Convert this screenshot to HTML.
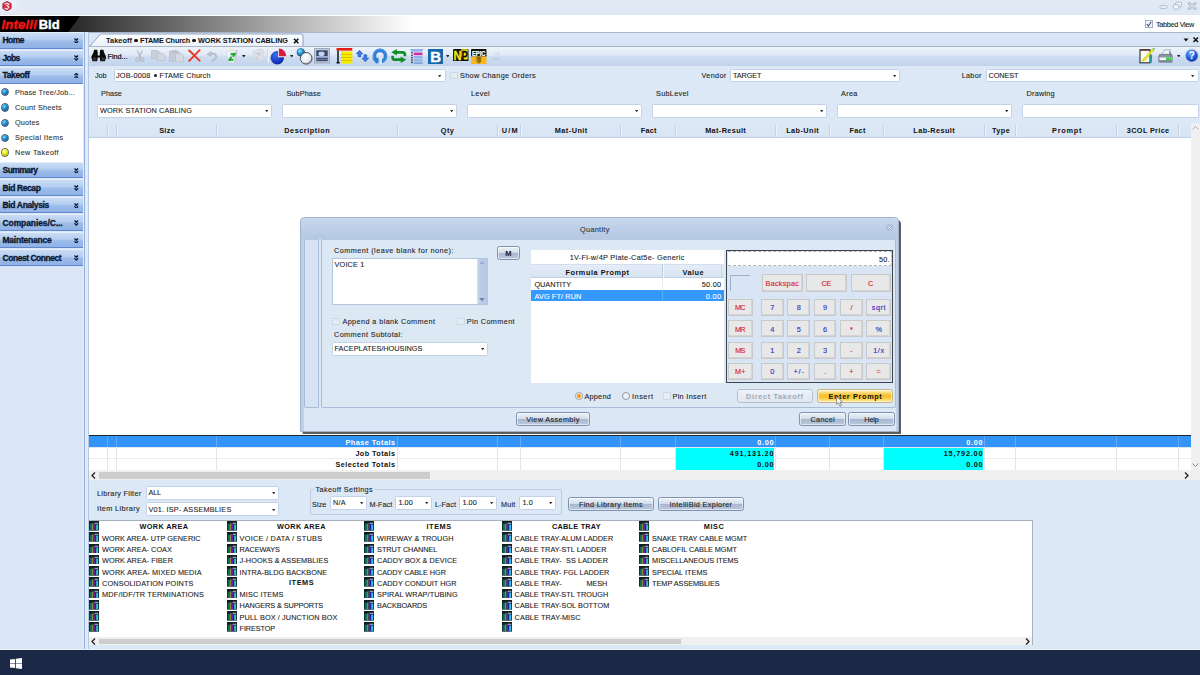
<!DOCTYPE html>
<html><head><meta charset="utf-8"><title>IntelliBid</title>
<style>
html,body{margin:0;padding:0;}
body{width:1200px;height:675px;overflow:hidden;position:relative;background:#dce8f5;font-family:"Liberation Sans",sans-serif;}
div,span.t,svg{position:absolute;box-sizing:border-box;}
span.t{white-space:pre;display:block;}
</style></head><body>
<div style="left:0px;top:0px;width:1200px;height:14.7px;background:linear-gradient(#e2ebf5,#dfe8f3);"></div>
<div style="left:0px;top:14.7px;width:1200px;height:2px;background:#fff;"></div>
<div style="left:0px;top:0px;width:22px;height:14px;background:radial-gradient(ellipse at 30% 40%,rgba(255,255,255,0.600) 0,rgba(255,255,255,0) 75%);"></div>
<svg style="left:1.500px;top:0.500px" width="10" height="10.500" viewBox="0 0 10 10.500"><path d="M5 0.300L9.300 2.600V7.400L5 10.200L0.700 7.400V2.600Z" fill="#d02a3e" stroke="#8a1a2a" stroke-width="0.500"/><path d="M2.300 3.300L5 2l2 1.200-2.200 1.400L7 6 5 8.300 2.600 7" stroke="#fbeaea" stroke-width="1.100" fill="none"/></svg>
<svg style="left:1158px;top:1px" width="40" height="10" viewBox="0 0 40 10"><g fill="#f1f5fa" stroke="#a9b7ca" stroke-width="0.900"><rect x="2" y="4.600" width="7" height="2.800" rx="1.200"/><rect x="17.500" y="1.300" width="6" height="4.600" rx="0.800"/><rect x="15.300" y="3.700" width="5.600" height="4.400" rx="0.800"/></g><path d="M31 2.300l6.400 5.400M37.400 2.300L31 7.700" stroke="#a3b2c6" stroke-width="2.600" stroke-linecap="round"/><path d="M31 2.300l6.400 5.400M37.400 2.300L31 7.700" stroke="#f3f6fa" stroke-width="1" stroke-linecap="round"/></svg>
<div style="left:0px;top:16px;width:1200px;height:16px;background:linear-gradient(to right,#262626 0,#2c2c2c 76px,#ffffff 412px,#fff 100%);"></div>
<svg style="left:0;top:15.5px" width="90" height="16.500" viewBox="0 0 90 16.500"><path d="M0 0H80L68 16.500H0Z" fill="#000"/></svg>
<span class="t" style="left:1.50px;top:15.50px;font-size:13px;line-height:17px;height:17px;letter-spacing:0.222px;color:#f01414;font-weight:bold;font-style:italic;-webkit-text-stroke:0.450px #f01414;">Intelli</span>
<span class="t" style="left:38.70px;top:15.50px;font-size:13px;line-height:17px;height:17px;letter-spacing:0.020px;color:#ffffff;font-weight:bold;-webkit-text-stroke:0.450px #fff;">Bid</span>
<div style="left:1145px;top:20px;width:8px;height:8px;background:#f3f6fb;border:1px solid #9fb0c8;"></div>
<svg style="left:1146px;top:21px" width="6" height="6" viewBox="0 0 6 6"><path d="M0.800 3l1.600 2L5.300.8" stroke="#3b4f78" stroke-width="1.100" fill="none"/></svg>
<span class="t" style="left:1156.00px;top:19.05px;font-size:7.3px;line-height:11.3px;height:11.3px;letter-spacing:-0.333px;color:#222;-webkit-text-stroke:0.090px #222;">Tabbed View</span>
<div style="left:0px;top:32px;width:84px;height:618px;background:#dae6f5;"></div>
<div style="left:0px;top:84px;width:84px;height:78px;background:#ffffff;"></div>
<div style="left:0px;top:32px;width:84px;height:16.5px;background:linear-gradient(#cadcf4 0,#b4cdf0 45%,#9dbcea 55%,#8fb1e5 100%);border-bottom:1px solid #5f88cf;border-top:1px solid #e4eefb;"></div>
<span class="t" style="left:2.50px;top:34.30px;font-size:8.5px;line-height:12.5px;height:12.5px;letter-spacing:-0.529px;color:#0a1630;font-weight:bold;-webkit-text-stroke:0.300px #0a1630;">Home</span>
<svg style="left:74px;top:37.75px" width="4.600" height="5.600" viewBox="-0.500 -0.500 4.600 5.600"><path d="M0 0L1.800 1.800L3.600 0M0 2.800L1.800 4.600L3.600 2.800" stroke="#0c1a38" stroke-width="1.300" fill="none"/></svg>
<div style="left:0px;top:49.5px;width:84px;height:16.5px;background:linear-gradient(#cadcf4 0,#b4cdf0 45%,#9dbcea 55%,#8fb1e5 100%);border-bottom:1px solid #5f88cf;border-top:1px solid #e4eefb;"></div>
<span class="t" style="left:2.50px;top:51.80px;font-size:8.5px;line-height:12.5px;height:12.5px;letter-spacing:-0.709px;color:#0a1630;font-weight:bold;-webkit-text-stroke:0.300px #0a1630;">Jobs</span>
<svg style="left:74px;top:55.25px" width="4.600" height="5.600" viewBox="-0.500 -0.500 4.600 5.600"><path d="M0 0L1.800 1.800L3.600 0M0 2.800L1.800 4.600L3.600 2.800" stroke="#0c1a38" stroke-width="1.300" fill="none"/></svg>
<div style="left:0px;top:67px;width:84px;height:16.5px;background:linear-gradient(#cadcf4 0,#b4cdf0 45%,#9dbcea 55%,#8fb1e5 100%);border-bottom:1px solid #5f88cf;border-top:1px solid #e4eefb;"></div>
<span class="t" style="left:2.50px;top:69.30px;font-size:8.5px;line-height:12.5px;height:12.5px;letter-spacing:-0.370px;color:#0a1630;font-weight:bold;-webkit-text-stroke:0.300px #0a1630;">Takeoff</span>
<svg style="left:74px;top:72.75px" width="4.600" height="5.600" viewBox="-0.500 -0.500 4.600 5.600"><path d="M0 1.800L1.800 0L3.600 1.800M0 4.600L1.800 2.800L3.600 4.600" stroke="#0c1a38" stroke-width="1.300" fill="none"/></svg>
<div style="left:0px;top:161.8px;width:84px;height:16.7px;background:linear-gradient(#cadcf4 0,#b4cdf0 45%,#9dbcea 55%,#8fb1e5 100%);border-bottom:1px solid #5f88cf;border-top:1px solid #e4eefb;"></div>
<span class="t" style="left:2.50px;top:164.20px;font-size:8.5px;line-height:12.5px;height:12.5px;letter-spacing:-0.534px;color:#0a1630;font-weight:bold;-webkit-text-stroke:0.300px #0a1630;">Summary</span>
<svg style="left:74px;top:167.65px" width="4.600" height="5.600" viewBox="-0.500 -0.500 4.600 5.600"><path d="M0 0L1.800 1.800L3.600 0M0 2.800L1.800 4.600L3.600 2.800" stroke="#0c1a38" stroke-width="1.300" fill="none"/></svg>
<div style="left:0px;top:179.3px;width:84px;height:16.7px;background:linear-gradient(#cadcf4 0,#b4cdf0 45%,#9dbcea 55%,#8fb1e5 100%);border-bottom:1px solid #5f88cf;border-top:1px solid #e4eefb;"></div>
<span class="t" style="left:2.50px;top:181.70px;font-size:8.5px;line-height:12.5px;height:12.5px;letter-spacing:-0.396px;color:#0a1630;font-weight:bold;-webkit-text-stroke:0.300px #0a1630;">Bid Recap</span>
<svg style="left:74px;top:185.15px" width="4.600" height="5.600" viewBox="-0.500 -0.500 4.600 5.600"><path d="M0 0L1.800 1.800L3.600 0M0 2.800L1.800 4.600L3.600 2.800" stroke="#0c1a38" stroke-width="1.300" fill="none"/></svg>
<div style="left:0px;top:196.8px;width:84px;height:16.7px;background:linear-gradient(#cadcf4 0,#b4cdf0 45%,#9dbcea 55%,#8fb1e5 100%);border-bottom:1px solid #5f88cf;border-top:1px solid #e4eefb;"></div>
<span class="t" style="left:2.50px;top:199.20px;font-size:8.5px;line-height:12.5px;height:12.5px;letter-spacing:-0.350px;color:#0a1630;font-weight:bold;-webkit-text-stroke:0.300px #0a1630;">Bid Analysis</span>
<svg style="left:74px;top:202.65px" width="4.600" height="5.600" viewBox="-0.500 -0.500 4.600 5.600"><path d="M0 0L1.800 1.800L3.600 0M0 2.800L1.800 4.600L3.600 2.800" stroke="#0c1a38" stroke-width="1.300" fill="none"/></svg>
<div style="left:0px;top:214.3px;width:84px;height:16.7px;background:linear-gradient(#cadcf4 0,#b4cdf0 45%,#9dbcea 55%,#8fb1e5 100%);border-bottom:1px solid #5f88cf;border-top:1px solid #e4eefb;"></div>
<span class="t" style="left:2.50px;top:216.70px;font-size:8.5px;line-height:12.5px;height:12.5px;letter-spacing:-0.100px;color:#0a1630;font-weight:bold;-webkit-text-stroke:0.300px #0a1630;">Companies/C...</span>
<svg style="left:74px;top:220.15px" width="4.600" height="5.600" viewBox="-0.500 -0.500 4.600 5.600"><path d="M0 0L1.800 1.800L3.600 0M0 2.800L1.800 4.600L3.600 2.800" stroke="#0c1a38" stroke-width="1.300" fill="none"/></svg>
<div style="left:0px;top:231.8px;width:84px;height:16.7px;background:linear-gradient(#cadcf4 0,#b4cdf0 45%,#9dbcea 55%,#8fb1e5 100%);border-bottom:1px solid #5f88cf;border-top:1px solid #e4eefb;"></div>
<span class="t" style="left:2.50px;top:234.20px;font-size:8.5px;line-height:12.5px;height:12.5px;letter-spacing:-0.226px;color:#0a1630;font-weight:bold;-webkit-text-stroke:0.300px #0a1630;">Maintenance</span>
<svg style="left:74px;top:237.65px" width="4.600" height="5.600" viewBox="-0.500 -0.500 4.600 5.600"><path d="M0 0L1.800 1.800L3.600 0M0 2.800L1.800 4.600L3.600 2.800" stroke="#0c1a38" stroke-width="1.300" fill="none"/></svg>
<div style="left:0px;top:249.3px;width:84px;height:16.7px;background:linear-gradient(#cadcf4 0,#b4cdf0 45%,#9dbcea 55%,#8fb1e5 100%);border-bottom:1px solid #5f88cf;border-top:1px solid #e4eefb;"></div>
<span class="t" style="left:2.50px;top:251.70px;font-size:8.5px;line-height:12.5px;height:12.5px;letter-spacing:-0.462px;color:#0a1630;font-weight:bold;-webkit-text-stroke:0.300px #0a1630;">Conest Connect</span>
<svg style="left:74px;top:255.15px" width="4.600" height="5.600" viewBox="-0.500 -0.500 4.600 5.600"><path d="M0 0L1.800 1.800L3.600 0M0 2.800L1.800 4.600L3.600 2.800" stroke="#0c1a38" stroke-width="1.300" fill="none"/></svg>
<div style="left:2.3px;top:89.2px;width:6.2px;height:6.2px;border-radius:50%;background:radial-gradient(circle at 38% 35%,#7fdcff 0,#1a94d4 38%,#0c4f98 75%,#082850 100%);box-shadow:0 0 0 0.700px rgba(8,20,45,0.850);"></div>
<span class="t" style="left:15.00px;top:86.75px;font-size:7.3px;line-height:11.3px;height:11.3px;letter-spacing:0.164px;color:#333;-webkit-text-stroke:0.090px #333;">Phase Tree/Job...</span>
<div style="left:2.3px;top:104.4px;width:6.2px;height:6.2px;border-radius:50%;background:radial-gradient(circle at 38% 35%,#7fdcff 0,#1a94d4 38%,#0c4f98 75%,#082850 100%);box-shadow:0 0 0 0.700px rgba(8,20,45,0.850);"></div>
<span class="t" style="left:15.00px;top:101.95px;font-size:7.3px;line-height:11.3px;height:11.3px;letter-spacing:0.231px;color:#333;-webkit-text-stroke:0.090px #333;">Count Sheets</span>
<div style="left:2.3px;top:119.5px;width:6.2px;height:6.2px;border-radius:50%;background:radial-gradient(circle at 38% 35%,#7fdcff 0,#1a94d4 38%,#0c4f98 75%,#082850 100%);box-shadow:0 0 0 0.700px rgba(8,20,45,0.850);"></div>
<span class="t" style="left:15.00px;top:117.05px;font-size:7.3px;line-height:11.3px;height:11.3px;letter-spacing:0.161px;color:#333;-webkit-text-stroke:0.090px #333;">Quotes</span>
<div style="left:2.3px;top:134.5px;width:6.2px;height:6.2px;border-radius:50%;background:radial-gradient(circle at 38% 35%,#7fdcff 0,#1a94d4 38%,#0c4f98 75%,#082850 100%);box-shadow:0 0 0 0.700px rgba(8,20,45,0.850);"></div>
<span class="t" style="left:15.00px;top:132.05px;font-size:7.3px;line-height:11.3px;height:11.3px;letter-spacing:0.360px;color:#333;-webkit-text-stroke:0.090px #333;">Special Items</span>
<div style="left:2.3px;top:149.4px;width:6.2px;height:6.2px;border-radius:50%;background:radial-gradient(circle at 38% 35%,#ffffb0 0,#f2ec10 40%,#b0aa00 80%,#6a6600 100%);box-shadow:0 0 0 0.700px rgba(8,20,45,0.850);"></div>
<span class="t" style="left:15.00px;top:146.95px;font-size:7.3px;line-height:11.3px;height:11.3px;letter-spacing:0.373px;color:#333;-webkit-text-stroke:0.090px #333;">New Takeoff</span>
<div style="left:83.3px;top:32px;width:5.5px;height:618px;background:#e1ebf8;"></div>
<div style="left:84.3px;top:32px;width:1.2px;height:618px;background:#93addb;"></div>
<div style="left:88.3px;top:32px;width:0.8px;height:618px;background:#b4c6e2;"></div>
<div style="left:89px;top:31.6px;width:1111px;height:14.9px;background:linear-gradient(#dde8f7,#d6e3f5);border-top:1.500px solid #a9b4c4;"></div>
<svg style="left:89px;top:33px" width="216" height="14" viewBox="0 0 216 14"><defs><linearGradient id="tg" x1="0" y1="0" x2="0" y2="1"><stop offset="0" stop-color="#ffffff"/><stop offset="1" stop-color="#eaf1fa"/></linearGradient></defs><path d="M0 13.500L2 12L10.500 2Q11.500 1 13.500 1H212Q214 1 214 3V13.500Z" fill="url(#tg)" stroke="#8aa3c6" stroke-width="1"/></svg>
<span class="t" style="left:106.00px;top:35.15px;font-size:7.3px;line-height:11.3px;height:11.3px;letter-spacing:0.084px;color:#111;font-weight:bold;">Takeoff</span>
<span class="t" style="left:140.00px;top:35.15px;font-size:7.3px;line-height:11.3px;height:11.3px;letter-spacing:-0.181px;color:#111;font-weight:bold;">FTAME Church</span>
<span class="t" style="left:198.00px;top:35.15px;font-size:7.3px;line-height:11.3px;height:11.3px;letter-spacing:-0.069px;color:#111;font-weight:bold;">WORK STATION CABLING</span>
<div style="left:134.3px;top:38.9px;width:3.4px;height:3.4px;border-radius:50%;background:#111;"></div>
<div style="left:192.3px;top:38.9px;width:3.4px;height:3.4px;border-radius:50%;background:#111;"></div>
<svg style="left:293px;top:37.800px" width="6.400" height="6" viewBox="0 0 6.400 6"><path d="M1 0.800l4.400 4.400M5.400 0.800l-4.400 4.400" stroke="#111" stroke-width="1.600"/></svg>
<svg style="left:1183px;top:36px" width="17" height="8" viewBox="0 0 17 8"><path d="M0.500 2.500h5l-2.500 3z" fill="#111"/><path d="M10.500 1.500l4.500 4.500M15 1.500l-4.500 4.500" stroke="#111" stroke-width="1.500"/></svg>
<div style="left:89px;top:46px;width:1111px;height:20px;background:linear-gradient(#eef3fa 0,#dfe9f6 45%,#cddcf0 55%,#c3d4ec 100%);border-top:1.300px solid #aab5c5;border-bottom:1px solid #c3d2e8;"></div>
<svg style="left:90.5px;top:48.8px" width="15.5" height="12.8" viewBox="0 0 15 15" preserveAspectRatio="none"><g fill="#0a0a0a"><path d="M1.500 14.500L0.300 9.500L2.500 3.500L3 1h3l.5 3v3.500h2V4L9 1h3l.5 2.500L14.700 9.500L13.500 14.500H9L8.500 10h-2L6 14.500Z"/></g><rect x="1.800" y="10" width="3.200" height="3.400" fill="#333"/><rect x="10" y="10" width="3.200" height="3.400" fill="#333"/></svg>
<span class="t" style="left:107.60px;top:50.95px;font-size:7.3px;line-height:11.3px;height:11.3px;letter-spacing:-0.041px;color:#111;-webkit-text-stroke:0.200px #111;">Find...</span>
<svg style="left:135px;top:49.5px" width="9.5" height="12.2" viewBox="0 0 11 14" preserveAspectRatio="none"><g stroke="#b4bbc7" stroke-width="1.500" fill="none"><path d="M2.500 0.500L7 9M8.500 0.500L4 9"/><circle cx="2.800" cy="11" r="2"/><circle cx="8.200" cy="11" r="2"/></g></svg>
<svg style="left:150.5px;top:50px" width="15" height="11" viewBox="0 0 15 11" preserveAspectRatio="none"><g fill="#c9cfd8" stroke="#bcc3cd" stroke-width="0.800"><path d="M0.500 0.500h6l2 2v6h-8z"/><path d="M6 3h5.500l2.500 2.500v5H6z" fill="#d3d8e0"/></g></svg>
<svg style="left:169px;top:49.5px" width="15" height="12.2" viewBox="0 0 15 12.2" preserveAspectRatio="none"><g fill="#c6ccd6" stroke="#bac1cc" stroke-width="0.800"><rect x="0.500" y="1.500" width="9.500" height="9.500"/><rect x="3" y="0.300" width="4.500" height="2.500" fill="#bdc4ce"/><path d="M6.500 3.500h5.500l2.500 2.500v5.700h-8z" fill="#d6dbe2"/></g></svg>
<svg style="left:188px;top:49.2px" width="12.8" height="12.8" viewBox="0 0 12.8 12.8" preserveAspectRatio="none"><path d="M1.200 1.500L11.600 11.600" stroke="#e63a22" stroke-width="2" stroke-linecap="round"/><path d="M11.600 1.200L1.200 11.800" stroke="#ee3320" stroke-width="1.800" stroke-linecap="round"/></svg>
<svg style="left:206px;top:50px" width="13" height="12" viewBox="0 0 13 12" preserveAspectRatio="none"><path d="M3.500 4.200C8 2.500 11.500 5 9.500 8.500Q8.500 10 6.500 11" stroke="#bac1cc" stroke-width="2.200" fill="none" stroke-linecap="round"/><path d="M0.300 4.500L5.500 0.800L5.800 7z" fill="#bac1cc"/></svg>
<svg style="left:224.5px;top:47.5px" width="14" height="15.5" viewBox="0 0 14 15.5" preserveAspectRatio="none"><path d="M1 3.500L12.500 2l-2 12.500L4 14.800z" fill="#eef3f8" stroke="#cfd8e4" stroke-width="0.700"/><path d="M10.500 3L12.500 2l-2 12.500-1.300.1z" fill="#b9c7da"/><path d="M4 2.500l2.500-2L9 2z" fill="#f6eaa0"/><path d="M5.500 6.200h4L8 8.700M8.500 11.700H4.800l1.500-3" stroke="#1aa62a" stroke-width="1.900" fill="none"/><path d="M8.300 4.200l2.600 2L8 7.700zM5.500 13.600L3 11.500l3-1.400z" fill="#1aa62a"/></svg>
<svg style="left:242.4px;top:55px" width="3.6" height="2.6" viewBox="0 0 3.6 2.6" preserveAspectRatio="none"><path d="M0 0h3.600l-1.800 2.400z" fill="#222"/></svg>
<svg style="left:250px;top:48px" width="14.5" height="14" viewBox="0 0 14.5 14" preserveAspectRatio="none"><path d="M3 3L11 1l3 2-1 9-9 1.500z" fill="#dce2e9" stroke="#ced5de" stroke-width="0.700"/><path d="M5.500 5.500h4.500l-1.500 2.500M9 11H5.500l1.300-2.800" stroke="#c8cfd9" stroke-width="1.500" fill="none"/></svg>
<div style="left:267px;top:49px;width:1px;height:14px;background:#cfdaea;"></div>
<div style="left:268px;top:49px;width:1px;height:14px;background:#eff4fa;"></div>
<svg style="left:270px;top:47.5px" width="17" height="17" viewBox="0 0 17 17" preserveAspectRatio="none"><defs><radialGradient id="pg" cx="0.400" cy="0.300" r="0.850"><stop offset="0" stop-color="#3f70ee"/><stop offset="0.600" stop-color="#1638c0"/><stop offset="1" stop-color="#0a1d7a"/></radialGradient></defs><circle cx="7.300" cy="9.800" r="6.700" fill="url(#pg)"/><path d="M8 9.300V0.800A8.500 8.500 0 0 1 16.500 9.300Z" fill="#e9eff8"/><path d="M8.900 8.300V0.600A7.500 7.500 0 0 1 16.300 8.300Z" fill="#d81c3c"/></svg>
<svg style="left:289.9px;top:55px" width="3.6" height="2.6" viewBox="0 0 3.6 2.6" preserveAspectRatio="none"><path d="M0 0h3.600l-1.800 2.400z" fill="#222"/></svg>
<svg style="left:295.5px;top:47.5px" width="17" height="17" viewBox="0 0 17 17" preserveAspectRatio="none"><defs><radialGradient id="cg1" cx="0.350" cy="0.300" r="0.800"><stop offset="0" stop-color="#8fe0ff"/><stop offset="0.500" stop-color="#2a9ad6"/><stop offset="1" stop-color="#0a4a88"/></radialGradient><radialGradient id="cg2" cx="0.400" cy="0.350" r="0.750"><stop offset="0" stop-color="#ffffff"/><stop offset="0.650" stop-color="#e9edf1"/><stop offset="1" stop-color="#737c86"/></radialGradient></defs><circle cx="4.800" cy="4.300" r="3.900" fill="url(#cg1)" stroke="#1a3a5a" stroke-width="0.500"/><circle cx="10.200" cy="10.300" r="5.800" fill="url(#cg2)" stroke="#3a3f46" stroke-width="0.900"/></svg>
<svg style="left:314px;top:48px" width="16" height="15.5" viewBox="0 0 16 15.5" preserveAspectRatio="none"><rect x="0.600" y="0.600" width="14.800" height="14.300" fill="#c6cfdb" stroke="#9aa6b6" stroke-width="1"/><rect x="2.300" y="2.300" width="11.400" height="10.900" fill="#34446f"/><ellipse cx="7.500" cy="5.800" rx="3.200" ry="2.300" fill="#c3d2ea"/><rect x="2.300" y="8" width="11.400" height="1.800" fill="#9fb2d6"/><rect x="2.300" y="10.800" width="11.400" height="1.300" fill="#6878a0"/></svg>
<svg style="left:336px;top:48px" width="16.5" height="16" viewBox="0 0 16.5 16" preserveAspectRatio="none"><rect x="0.500" y="0" width="15.800" height="2.600" fill="#e61c14"/><path d="M2 2.500v12.300M0.500 14.800h3.200" stroke="#111" stroke-width="1.500"/><rect x="5" y="3.400" width="11.300" height="12.300" fill="#f6ee00"/><path d="M5 6.500h11.300M5 9.500h11.300M5 12.500h11.300" stroke="#e0a800" stroke-width="0.700"/></svg>
<svg style="left:355.5px;top:50px" width="13" height="12" viewBox="0 0 13 12" preserveAspectRatio="none"><g fill="#3a7ce6" stroke="#1b4fb8" stroke-width="0.600"><path d="M3.500 0.300L6.800 3.800H4.900V6.700H2.100V3.800H0.200z"/><path d="M9.300 11.700L6 8.200H7.900V4.800h2.800v3.400h1.900z"/></g></svg>
<svg style="left:372px;top:47.5px" width="16" height="16" viewBox="0 0 16 16" preserveAspectRatio="none"><circle cx="8" cy="8" r="5.600" fill="none" stroke="#2f7fd8" stroke-width="3.600"/><circle cx="8" cy="8" r="6.800" fill="none" stroke="#5a9fe8" stroke-width="0.800"/><path d="M7.300 8V16h2.600V10z" fill="#dfe9f6"/><path d="M0.300 10.500L7 9.800L4.500 16z" fill="#2f7fd8"/><path d="M7 9.800L7 16" stroke="#dfe9f6" stroke-width="0.600"/></svg>
<svg style="left:391px;top:48.5px" width="15.5" height="14" viewBox="0 0 15.5 14" preserveAspectRatio="none"><g fill="none" stroke="#0f8f22" stroke-width="2.700"><path d="M5 3.300H11.300Q13.900 3.300 13.900 5.600V7.200"/><path d="M10.500 10.700H4.200Q1.600 10.700 1.600 8.400V6.800"/></g><path d="M5.800 0L0.200 3.300L5.800 6.600z" fill="#0f8f22"/><path d="M9.700 7.400L15.300 10.700L9.700 14z" fill="#0f8f22"/></svg>
<svg style="left:410px;top:48.5px" width="13.5" height="15.5" viewBox="0 0 13.5 15.5" preserveAspectRatio="none"><path d="M0 0h13.500l-1.500 2.800H1.500z" fill="#8fb6ea"/><path d="M2 3v12" stroke="#222" stroke-width="1.300" stroke-dasharray="1.600 0.800"/><rect x="3.800" y="3.600" width="8.700" height="2.600" fill="#d628a0"/><rect x="3.800" y="7" width="8.700" height="2.500" fill="#8db4e6"/><rect x="3.800" y="10.200" width="8.700" height="2.300" fill="#8db4e6"/><rect x="3.800" y="13.200" width="8.700" height="2" fill="#7aa6e0"/></svg>
<svg style="left:427.5px;top:48.5px" width="15.2" height="15.2" viewBox="0 0 15.2 15.2" preserveAspectRatio="none"><rect width="15.200" height="15.200" fill="#1666aa"/><text x="7.700" y="13" text-anchor="middle" font-family="Liberation Sans, sans-serif" font-weight="bold" font-size="15" fill="#fff" stroke="#fff" stroke-width="0.400">B</text></svg>
<svg style="left:445.8px;top:55px" width="3.6" height="2.6" viewBox="0 0 3.6 2.6" preserveAspectRatio="none"><path d="M0 0h3.600l-1.800 2.400z" fill="#222"/></svg>
<svg style="left:453px;top:48.5px" width="15.5" height="12.7" viewBox="0 0 15.5 12.7" preserveAspectRatio="none"><rect width="15.500" height="12.700" rx="1.200" fill="#0c0c0c"/><path d="M8.300 0.300h6.400v10.200H10.300L8.300 7z" fill="#f4ea10"/><text x="0.400" y="10.800" font-family="Liberation Sans, sans-serif" font-weight="bold" font-size="12" fill="#f4ea10" stroke="#f4ea10" stroke-width="0.300" textLength="8" lengthAdjust="spacingAndGlyphs">N</text><text x="8.500" y="10.800" font-family="Liberation Sans, sans-serif" font-weight="bold" font-size="12" fill="#0c0c0c" stroke="#0c0c0c" stroke-width="0.300" textLength="6.300" lengthAdjust="spacingAndGlyphs">P</text></svg>
<svg style="left:471px;top:48.5px" width="15.5" height="15" viewBox="0 0 15.5 15" preserveAspectRatio="none"><rect width="15.500" height="7.800" rx="0.800" fill="#101010"/><rect y="7.500" width="15.500" height="7.500" fill="#f7b71a"/><text x="7.750" y="6.700" text-anchor="middle" font-family="Liberation Sans, sans-serif" font-weight="bold" font-size="7" fill="#fff" stroke="#fff" stroke-width="0.250" textLength="13.500" lengthAdjust="spacingAndGlyphs">EPIC</text><path d="M5.800 8.500h4v3.300q0 1.500-2 2.500q-2-1-2-2.500z" fill="#e6a400" stroke="#6a5410" stroke-width="0.700"/><text x="7.800" y="13.300" text-anchor="middle" font-family="Liberation Sans, sans-serif" font-weight="bold" font-size="5" fill="#5a4708">$</text></svg>
<svg style="left:493px;top:50.5px" width="8" height="6" viewBox="0 0 8 6" preserveAspectRatio="none"><path d="M0.500 3h5.500M4 0.800L6.500 3L4 5.200" stroke="#ccd4de" stroke-width="0.900" fill="none"/></svg>
<span class="t" style="left:492.40px;top:56.25px;font-size:3.5px;line-height:7.5px;height:7.5px;letter-spacing:0.000px;color:#bfc8d4;-webkit-text-stroke:0.090px #bfc8d4;">Task</span>
<svg style="left:1139px;top:48px" width="16" height="16" viewBox="0 0 16 16" preserveAspectRatio="none"><rect x="1" y="1.800" width="10" height="13" fill="#fbfbf6" stroke="#3a3a3a" stroke-width="1.200"/><path d="M1 2h10" stroke="#5a3030" stroke-width="1.400"/><path d="M3 12.500L13.500 0.800l1.500 1.300L5 13.500z" fill="#f2e41a" stroke="#b8aa10" stroke-width="0.400"/><path d="M13.500 0.800l1.500 1.300l1-1.300l-1-.8z" fill="#2ab89a"/><path d="M11.300 6.500l1.900.5-.5 8h-1.900z" fill="#1f9a8a"/></svg>
<svg style="left:1157.5px;top:48.5px" width="15" height="14.5" viewBox="0 0 15 14.5" preserveAspectRatio="none"><path d="M4 5.500L6.500 0.800h6L11.500 5.500z" fill="#f2f4f7" stroke="#9aa2ae" stroke-width="0.700"/><path d="M0.800 7Q0.800 5.300 2.500 5.300h10Q14.200 5.300 14.200 7V12.500H0.800z" fill="#8a93a0" stroke="#6d7684" stroke-width="0.700"/><path d="M11 1l2.800 4.500v1h-2z" fill="#737c8a"/><rect x="1.500" y="8.500" width="12" height="2.600" fill="#f4f6f8"/><rect x="8" y="8.500" width="5" height="2.600" fill="#2fd43e"/><rect x="0.800" y="11.500" width="13.400" height="2.200" fill="#7d8694"/></svg>
<svg style="left:1176.5px;top:54.9px" width="3.6" height="2.6" viewBox="0 0 3.6 2.6" preserveAspectRatio="none"><path d="M0 0h3.600l-1.800 2.400z" fill="#222"/></svg>
<svg style="left:1183.5px;top:48px" width="15.5" height="15.5" viewBox="0 0 15.5 15.5" preserveAspectRatio="none"><defs><radialGradient id="hg" cx="0.400" cy="0.300" r="0.800"><stop offset="0" stop-color="#6aa8ff"/><stop offset="0.550" stop-color="#1f5fd4"/><stop offset="1" stop-color="#0a2f9a"/></radialGradient></defs><circle cx="7.750" cy="7.750" r="7.200" fill="#c3d3ec"/><circle cx="7.750" cy="7.750" r="6" fill="url(#hg)"/><text x="7.750" y="11.300" text-anchor="middle" font-family="Liberation Sans, sans-serif" font-weight="bold" font-size="10" fill="#fff">?</text></svg>
<span class="t" style="left:95.00px;top:70.15px;font-size:7.3px;line-height:11.3px;height:11.3px;letter-spacing:-0.090px;color:#222;-webkit-text-stroke:0.090px #222;">Job</span>
<div style="left:113.5px;top:69px;width:332px;height:13.3px;background:#fff;border:1px solid #c3d2e8;border-radius:1.500px;"></div>
<svg style="left:438.3px;top:75.25px" width="3.400" height="2.400" viewBox="0 0 3.400 2.400"><path d="M0 0h3.400l-1.700 2.200z" fill="#333"/></svg>
<span class="t" style="left:116.00px;top:70.25px;font-size:7.3px;line-height:11.3px;height:11.3px;letter-spacing:0.217px;color:#222;-webkit-text-stroke:0.090px #222;">JOB-0008</span>
<span class="t" style="left:159.40px;top:70.25px;font-size:7.3px;line-height:11.3px;height:11.3px;letter-spacing:0.120px;color:#222;-webkit-text-stroke:0.090px #222;">FTAME Church</span>
<div style="left:153.5px;top:74.2px;width:3px;height:3px;border-radius:50%;background:#222;"></div>
<div style="left:450px;top:71.5px;width:7.5px;height:7.5px;background:#e6ecf5;border:1px solid #cdd7e6;"></div>
<span class="t" style="left:460.00px;top:70.25px;font-size:7.3px;line-height:11.3px;height:11.3px;letter-spacing:0.323px;color:#222;-webkit-text-stroke:0.090px #222;">Show Change Orders</span>
<span class="t" style="left:701.50px;top:70.25px;font-size:7.3px;line-height:11.3px;height:11.3px;letter-spacing:0.311px;color:#222;-webkit-text-stroke:0.090px #222;">Vendor</span>
<div style="left:730px;top:69px;width:170px;height:13.3px;background:#fff;border:1px solid #c3d2e8;border-radius:1.500px;"></div>
<svg style="left:892.8px;top:75.25px" width="3.400" height="2.400" viewBox="0 0 3.400 2.400"><path d="M0 0h3.400l-1.700 2.200z" fill="#333"/></svg>
<span class="t" style="left:733.00px;top:70.30px;font-size:7.3px;line-height:11.3px;height:11.3px;letter-spacing:-0.094px;color:#222;-webkit-text-stroke:0.090px #222;">TARGET</span>
<span class="t" style="left:961.70px;top:70.25px;font-size:7.3px;line-height:11.3px;height:11.3px;letter-spacing:0.266px;color:#222;-webkit-text-stroke:0.090px #222;">Labor</span>
<div style="left:985.5px;top:69px;width:213px;height:13.3px;background:#fff;border:1px solid #c3d2e8;border-radius:1.500px;"></div>
<svg style="left:1191.3px;top:75.25px" width="3.400" height="2.400" viewBox="0 0 3.400 2.400"><path d="M0 0h3.400l-1.700 2.200z" fill="#333"/></svg>
<span class="t" style="left:988.50px;top:70.30px;font-size:7.3px;line-height:11.3px;height:11.3px;letter-spacing:-0.070px;color:#222;-webkit-text-stroke:0.090px #222;">CONEST</span>
<span class="t" style="left:101.00px;top:87.85px;font-size:7.3px;line-height:11.3px;height:11.3px;letter-spacing:0.060px;color:#222;-webkit-text-stroke:0.090px #222;">Phase</span>
<span class="t" style="left:286.40px;top:87.85px;font-size:7.3px;line-height:11.3px;height:11.3px;letter-spacing:0.114px;color:#222;-webkit-text-stroke:0.090px #222;">SubPhase</span>
<span class="t" style="left:471.00px;top:87.85px;font-size:7.3px;line-height:11.3px;height:11.3px;letter-spacing:0.310px;color:#222;-webkit-text-stroke:0.090px #222;">Level</span>
<span class="t" style="left:656.00px;top:87.85px;font-size:7.3px;line-height:11.3px;height:11.3px;letter-spacing:0.283px;color:#222;-webkit-text-stroke:0.090px #222;">SubLevel</span>
<span class="t" style="left:841.00px;top:87.85px;font-size:7.3px;line-height:11.3px;height:11.3px;letter-spacing:0.320px;color:#222;-webkit-text-stroke:0.090px #222;">Area</span>
<span class="t" style="left:1026.50px;top:87.85px;font-size:7.3px;line-height:11.3px;height:11.3px;letter-spacing:0.232px;color:#222;-webkit-text-stroke:0.090px #222;">Drawing</span>
<div style="left:97px;top:104px;width:175px;height:13.6px;background:#fff;border:1px solid #c3d2e8;border-radius:1.500px;"></div>
<svg style="left:264.8px;top:110.4px" width="3.400" height="2.400" viewBox="0 0 3.400 2.400"><path d="M0 0h3.400l-1.700 2.200z" fill="#333"/></svg>
<span class="t" style="left:100.00px;top:105.45px;font-size:7.3px;line-height:11.3px;height:11.3px;letter-spacing:0.132px;color:#222;-webkit-text-stroke:0.090px #222;">WORK STATION CABLING</span>
<div style="left:282px;top:104px;width:175px;height:13.6px;background:#fff;border:1px solid #c3d2e8;border-radius:1.500px;"></div>
<svg style="left:449.8px;top:110.4px" width="3.400" height="2.400" viewBox="0 0 3.400 2.400"><path d="M0 0h3.400l-1.700 2.200z" fill="#333"/></svg>
<div style="left:467px;top:104px;width:175px;height:13.6px;background:#fff;border:1px solid #c3d2e8;border-radius:1.500px;"></div>
<svg style="left:634.8px;top:110.4px" width="3.400" height="2.400" viewBox="0 0 3.400 2.400"><path d="M0 0h3.400l-1.700 2.200z" fill="#333"/></svg>
<div style="left:652px;top:104px;width:175px;height:13.6px;background:#fff;border:1px solid #c3d2e8;border-radius:1.500px;"></div>
<svg style="left:819.8px;top:110.4px" width="3.400" height="2.400" viewBox="0 0 3.400 2.400"><path d="M0 0h3.400l-1.700 2.200z" fill="#333"/></svg>
<div style="left:837px;top:104px;width:175px;height:13.6px;background:#fff;border:1px solid #c3d2e8;border-radius:1.500px;"></div>
<svg style="left:1004.8px;top:110.4px" width="3.400" height="2.400" viewBox="0 0 3.400 2.400"><path d="M0 0h3.400l-1.700 2.200z" fill="#333"/></svg>
<div style="left:1022px;top:104px;width:176.5px;height:13.6px;background:#fff;border:1px solid #c3d2e8;border-radius:1.500px;"></div>
<div style="left:89px;top:123px;width:1111px;height:15px;background:linear-gradient(#dde8f6,#d9e5f4);border-bottom:1px solid #bfcfe6;"></div>
<div style="left:89px;top:138px;width:1101.5px;height:298px;background:#fff;"></div>
<div style="left:106.5px;top:125px;width:1px;height:12px;background:#c3d1e6;"></div>
<div style="left:107.5px;top:125px;width:1px;height:12px;background:#edf3fa;"></div>
<div style="left:115.5px;top:125px;width:1px;height:12px;background:#c3d1e6;"></div>
<div style="left:116.5px;top:125px;width:1px;height:12px;background:#edf3fa;"></div>
<div style="left:215.5px;top:125px;width:1px;height:12px;background:#c3d1e6;"></div>
<div style="left:216.5px;top:125px;width:1px;height:12px;background:#edf3fa;"></div>
<div style="left:396.5px;top:125px;width:1px;height:12px;background:#c3d1e6;"></div>
<div style="left:397.5px;top:125px;width:1px;height:12px;background:#edf3fa;"></div>
<div style="left:496.5px;top:125px;width:1px;height:12px;background:#c3d1e6;"></div>
<div style="left:497.5px;top:125px;width:1px;height:12px;background:#edf3fa;"></div>
<div style="left:520.2px;top:125px;width:1px;height:12px;background:#c3d1e6;"></div>
<div style="left:521.2px;top:125px;width:1px;height:12px;background:#edf3fa;"></div>
<div style="left:620.2px;top:125px;width:1px;height:12px;background:#c3d1e6;"></div>
<div style="left:621.2px;top:125px;width:1px;height:12px;background:#edf3fa;"></div>
<div style="left:675.1px;top:125px;width:1px;height:12px;background:#c3d1e6;"></div>
<div style="left:676.1px;top:125px;width:1px;height:12px;background:#edf3fa;"></div>
<div style="left:774.5px;top:125px;width:1px;height:12px;background:#c3d1e6;"></div>
<div style="left:775.5px;top:125px;width:1px;height:12px;background:#edf3fa;"></div>
<div style="left:829.1px;top:125px;width:1px;height:12px;background:#c3d1e6;"></div>
<div style="left:830.1px;top:125px;width:1px;height:12px;background:#edf3fa;"></div>
<div style="left:883px;top:125px;width:1px;height:12px;background:#c3d1e6;"></div>
<div style="left:884px;top:125px;width:1px;height:12px;background:#edf3fa;"></div>
<div style="left:983.5px;top:125px;width:1px;height:12px;background:#c3d1e6;"></div>
<div style="left:984.5px;top:125px;width:1px;height:12px;background:#edf3fa;"></div>
<div style="left:1015.3px;top:125px;width:1px;height:12px;background:#c3d1e6;"></div>
<div style="left:1016.3px;top:125px;width:1px;height:12px;background:#edf3fa;"></div>
<div style="left:1115.5px;top:125px;width:1px;height:12px;background:#c3d1e6;"></div>
<div style="left:1116.5px;top:125px;width:1px;height:12px;background:#edf3fa;"></div>
<div style="left:1178.3px;top:125px;width:1px;height:12px;background:#c3d1e6;"></div>
<div style="left:1179.3px;top:125px;width:1px;height:12px;background:#edf3fa;"></div>
<span class="t" style="left:159.17px;top:125.25px;font-size:7.3px;line-height:11.3px;height:11.3px;letter-spacing:0.348px;color:#111;font-weight:bold;">Size</span>
<span class="t" style="left:284.27px;top:125.25px;font-size:7.3px;line-height:11.3px;height:11.3px;letter-spacing:0.531px;color:#111;font-weight:bold;">Description</span>
<span class="t" style="left:440.84px;top:125.25px;font-size:7.3px;line-height:11.3px;height:11.3px;letter-spacing:0.377px;color:#111;font-weight:bold;">Qty</span>
<span class="t" style="left:501.70px;top:125.25px;font-size:7.3px;line-height:11.3px;height:11.3px;letter-spacing:1.306px;color:#111;font-weight:bold;">U/M</span>
<span class="t" style="left:554.74px;top:125.25px;font-size:7.3px;line-height:11.3px;height:11.3px;letter-spacing:0.476px;color:#111;font-weight:bold;">Mat-Unit</span>
<span class="t" style="left:640.72px;top:125.25px;font-size:7.3px;line-height:11.3px;height:11.3px;letter-spacing:0.248px;color:#111;font-weight:bold;">Fact</span>
<span class="t" style="left:705.18px;top:125.25px;font-size:7.3px;line-height:11.3px;height:11.3px;letter-spacing:0.369px;color:#111;font-weight:bold;">Mat-Result</span>
<span class="t" style="left:786.21px;top:125.25px;font-size:7.3px;line-height:11.3px;height:11.3px;letter-spacing:0.425px;color:#111;font-weight:bold;">Lab-Unit</span>
<span class="t" style="left:849.62px;top:125.25px;font-size:7.3px;line-height:11.3px;height:11.3px;letter-spacing:0.248px;color:#111;font-weight:bold;">Fact</span>
<span class="t" style="left:913.35px;top:125.25px;font-size:7.3px;line-height:11.3px;height:11.3px;letter-spacing:0.398px;color:#111;font-weight:bold;">Lab-Result</span>
<span class="t" style="left:991.88px;top:125.25px;font-size:7.3px;line-height:11.3px;height:11.3px;letter-spacing:0.451px;color:#111;font-weight:bold;">Type</span>
<span class="t" style="left:1052.07px;top:125.25px;font-size:7.3px;line-height:11.3px;height:11.3px;letter-spacing:0.742px;color:#111;font-weight:bold;">Prompt</span>
<span class="t" style="left:1126.87px;top:125.25px;font-size:7.3px;line-height:11.3px;height:11.3px;letter-spacing:0.338px;color:#111;font-weight:bold;">3COL Price</span>
<div style="left:1190.5px;top:123px;width:9.5px;height:347px;background:#f0f0f0;"></div>
<svg style="left:1192px;top:126px" width="7" height="4" viewBox="0 0 7 4"><path d="M0.500 3.500L3.500 0.500L6.500 3.500" stroke="#b0b0b0" stroke-width="1" fill="none"/></svg>
<svg style="left:1192px;top:463px" width="7" height="4" viewBox="0 0 7 4"><path d="M0.500 0.500L3.500 3.500L6.500 0.500" stroke="#8a8a8a" stroke-width="1" fill="none"/></svg>
<div style="left:89px;top:434.6px;width:1101.5px;height:1.8px;background:#1f2730;"></div>
<div style="left:89px;top:436.2px;width:1101.5px;height:11.3px;background:#3294f6;"></div>
<div style="left:89px;top:447.5px;width:1101.5px;height:22.7px;background:#fff;"></div>
<div style="left:89px;top:458.3px;width:1101.5px;height:1px;background:#ececec;"></div>
<div style="left:106.5px;top:436.3px;width:1px;height:11.2px;background:#5fa9f6;"></div>
<div style="left:106.5px;top:447.5px;width:1px;height:22.7px;background:#e4e4e4;"></div>
<div style="left:115.5px;top:436.3px;width:1px;height:11.2px;background:#5fa9f6;"></div>
<div style="left:115.5px;top:447.5px;width:1px;height:22.7px;background:#e4e4e4;"></div>
<div style="left:215.5px;top:436.3px;width:1px;height:11.2px;background:#5fa9f6;"></div>
<div style="left:215.5px;top:447.5px;width:1px;height:22.7px;background:#e4e4e4;"></div>
<div style="left:396.5px;top:436.3px;width:1px;height:11.2px;background:#5fa9f6;"></div>
<div style="left:396.5px;top:447.5px;width:1px;height:22.7px;background:#e4e4e4;"></div>
<div style="left:496.5px;top:436.3px;width:1px;height:11.2px;background:#5fa9f6;"></div>
<div style="left:496.5px;top:447.5px;width:1px;height:22.7px;background:#e4e4e4;"></div>
<div style="left:520.2px;top:436.3px;width:1px;height:11.2px;background:#5fa9f6;"></div>
<div style="left:520.2px;top:447.5px;width:1px;height:22.7px;background:#e4e4e4;"></div>
<div style="left:620.2px;top:436.3px;width:1px;height:11.2px;background:#5fa9f6;"></div>
<div style="left:620.2px;top:447.5px;width:1px;height:22.7px;background:#e4e4e4;"></div>
<div style="left:675.1px;top:436.3px;width:1px;height:11.2px;background:#5fa9f6;"></div>
<div style="left:675.1px;top:447.5px;width:1px;height:22.7px;background:#e4e4e4;"></div>
<div style="left:774.5px;top:436.3px;width:1px;height:11.2px;background:#5fa9f6;"></div>
<div style="left:774.5px;top:447.5px;width:1px;height:22.7px;background:#e4e4e4;"></div>
<div style="left:829.1px;top:436.3px;width:1px;height:11.2px;background:#5fa9f6;"></div>
<div style="left:829.1px;top:447.5px;width:1px;height:22.7px;background:#e4e4e4;"></div>
<div style="left:883px;top:436.3px;width:1px;height:11.2px;background:#5fa9f6;"></div>
<div style="left:883px;top:447.5px;width:1px;height:22.7px;background:#e4e4e4;"></div>
<div style="left:983.5px;top:436.3px;width:1px;height:11.2px;background:#5fa9f6;"></div>
<div style="left:983.5px;top:447.5px;width:1px;height:22.7px;background:#e4e4e4;"></div>
<div style="left:1015.3px;top:436.3px;width:1px;height:11.2px;background:#5fa9f6;"></div>
<div style="left:1015.3px;top:447.5px;width:1px;height:22.7px;background:#e4e4e4;"></div>
<div style="left:1115.5px;top:436.3px;width:1px;height:11.2px;background:#5fa9f6;"></div>
<div style="left:1115.5px;top:447.5px;width:1px;height:22.7px;background:#e4e4e4;"></div>
<div style="left:1178.3px;top:436.3px;width:1px;height:11.2px;background:#5fa9f6;"></div>
<div style="left:1178.3px;top:447.5px;width:1px;height:22.7px;background:#e4e4e4;"></div>
<div style="left:675.8px;top:447.8px;width:98.7px;height:22.2px;background:#00ffff;"></div>
<div style="left:883.8px;top:447.8px;width:99.7px;height:22.2px;background:#00ffff;"></div>
<span class="t" style="left:345.46px;top:436.85px;font-size:7.3px;line-height:11.3px;height:11.3px;letter-spacing:0.459px;color:#fff;font-weight:bold;">Phase Totals</span>
<span class="t" style="left:355.40px;top:448.05px;font-size:7.3px;line-height:11.3px;height:11.3px;letter-spacing:0.404px;color:#111;font-weight:bold;">Job Totals</span>
<span class="t" style="left:335.47px;top:459.25px;font-size:7.3px;line-height:11.3px;height:11.3px;letter-spacing:0.466px;color:#111;font-weight:bold;">Selected Totals</span>
<span class="t" style="left:757.20px;top:436.85px;font-size:7.3px;line-height:11.3px;height:11.3px;letter-spacing:0.698px;color:#fff;font-weight:bold;">0.00</span>
<span class="t" style="left:729.80px;top:448.05px;font-size:7.3px;line-height:11.3px;height:11.3px;letter-spacing:0.797px;color:#111;font-weight:bold;">491,131.20</span>
<span class="t" style="left:757.20px;top:459.25px;font-size:7.3px;line-height:11.3px;height:11.3px;letter-spacing:0.698px;color:#111;font-weight:bold;">0.00</span>
<span class="t" style="left:966.20px;top:436.85px;font-size:7.3px;line-height:11.3px;height:11.3px;letter-spacing:0.698px;color:#fff;font-weight:bold;">0.00</span>
<span class="t" style="left:943.78px;top:448.05px;font-size:7.3px;line-height:11.3px;height:11.3px;letter-spacing:0.781px;color:#111;font-weight:bold;">15,792.00</span>
<span class="t" style="left:966.20px;top:459.25px;font-size:7.3px;line-height:11.3px;height:11.3px;letter-spacing:0.698px;color:#111;font-weight:bold;">0.00</span>
<div style="left:89px;top:470.2px;width:1101.5px;height:10px;background:#f0f0f0;"></div>
<div style="left:99px;top:471.7px;width:331px;height:7px;background:#cdcdcd;"></div>
<svg style="left:91px;top:472px" width="5" height="7" viewBox="0 0 5 7"><path d="M4 0.500L1 3.500L4 6.500" stroke="#222" stroke-width="1.300" fill="none"/></svg>
<svg style="left:1183.500px;top:472px" width="5" height="7" viewBox="0 0 5 7"><path d="M1 0.500L4 3.500L1 6.500" stroke="#222" stroke-width="1.300" fill="none"/></svg>
<div style="left:1190.5px;top:470.2px;width:9.5px;height:10px;background:#f0f0f0;"></div>
<span class="t" style="left:97.00px;top:488.35px;font-size:7.3px;line-height:11.3px;height:11.3px;letter-spacing:0.281px;color:#222;-webkit-text-stroke:0.090px #222;">Library Filter</span>
<div style="left:145.5px;top:486px;width:133.5px;height:13.5px;background:#fff;border:1px solid #c3d2e8;border-radius:1.500px;"></div>
<svg style="left:271.8px;top:492.35px" width="3.400" height="2.400" viewBox="0 0 3.400 2.400"><path d="M0 0h3.400l-1.700 2.200z" fill="#333"/></svg>
<span class="t" style="left:148.50px;top:487.40px;font-size:7.3px;line-height:11.3px;height:11.3px;letter-spacing:-0.163px;color:#222;-webkit-text-stroke:0.090px #222;">ALL</span>
<span class="t" style="left:97.00px;top:503.35px;font-size:7.3px;line-height:11.3px;height:11.3px;letter-spacing:0.372px;color:#222;-webkit-text-stroke:0.090px #222;">Item Library</span>
<div style="left:145.5px;top:502.4px;width:133.5px;height:13.6px;background:#fff;border:1px solid #c3d2e8;border-radius:1.500px;"></div>
<svg style="left:271.8px;top:508.8px" width="3.400" height="2.400" viewBox="0 0 3.400 2.400"><path d="M0 0h3.400l-1.700 2.200z" fill="#333"/></svg>
<span class="t" style="left:148.50px;top:503.85px;font-size:7.3px;line-height:11.3px;height:11.3px;letter-spacing:0.194px;color:#222;-webkit-text-stroke:0.090px #222;">V01. ISP- ASSEMBLIES</span>
<div style="left:309.5px;top:489px;width:252px;height:26px;border:1px solid #bccbe2;border-radius:2px;"></div>
<div style="left:313.5px;top:485px;width:61.5px;height:8px;background:#dce8f5;"></div>
<span class="t" style="left:315.50px;top:484.35px;font-size:7.3px;line-height:11.3px;height:11.3px;letter-spacing:0.356px;color:#222;-webkit-text-stroke:0.090px #222;">Takeoff Settings</span>
<span class="t" style="left:312.00px;top:499.05px;font-size:7.3px;line-height:11.3px;height:11.3px;letter-spacing:0.075px;color:#222;-webkit-text-stroke:0.090px #222;">Size</span>
<div style="left:330px;top:496px;width:37px;height:13.5px;background:#fff;border:1px solid #c3d2e8;border-radius:1.500px;"></div>
<svg style="left:359.8px;top:502.35px" width="3.400" height="2.400" viewBox="0 0 3.400 2.400"><path d="M0 0h3.400l-1.700 2.200z" fill="#333"/></svg>
<span class="t" style="left:333.00px;top:497.40px;font-size:7.3px;line-height:11.3px;height:11.3px;letter-spacing:0.277px;color:#222;-webkit-text-stroke:0.090px #222;">N/A</span>
<span class="t" style="left:369.40px;top:499.05px;font-size:7.3px;line-height:11.3px;height:11.3px;letter-spacing:0.049px;color:#222;-webkit-text-stroke:0.090px #222;">M-Fact</span>
<div style="left:395.4px;top:496px;width:37px;height:13.5px;background:#fff;border:1px solid #c3d2e8;border-radius:1.500px;"></div>
<svg style="left:425.2px;top:502.35px" width="3.400" height="2.400" viewBox="0 0 3.400 2.400"><path d="M0 0h3.400l-1.700 2.200z" fill="#333"/></svg>
<span class="t" style="left:398.40px;top:497.40px;font-size:7.3px;line-height:11.3px;height:11.3px;letter-spacing:0.073px;color:#222;-webkit-text-stroke:0.090px #222;">1.00</span>
<span class="t" style="left:435.00px;top:499.05px;font-size:7.3px;line-height:11.3px;height:11.3px;letter-spacing:0.052px;color:#222;-webkit-text-stroke:0.090px #222;">L-Fact</span>
<div style="left:459.4px;top:496px;width:38px;height:13.5px;background:#fff;border:1px solid #c3d2e8;border-radius:1.500px;"></div>
<svg style="left:490.2px;top:502.35px" width="3.400" height="2.400" viewBox="0 0 3.400 2.400"><path d="M0 0h3.400l-1.700 2.200z" fill="#333"/></svg>
<span class="t" style="left:462.40px;top:497.40px;font-size:7.3px;line-height:11.3px;height:11.3px;letter-spacing:0.073px;color:#222;-webkit-text-stroke:0.090px #222;">1.00</span>
<span class="t" style="left:501.00px;top:499.05px;font-size:7.3px;line-height:11.3px;height:11.3px;letter-spacing:0.202px;color:#222;-webkit-text-stroke:0.090px #222;">Mult</span>
<div style="left:519.4px;top:496px;width:37px;height:13.5px;background:#fff;border:1px solid #c3d2e8;border-radius:1.500px;"></div>
<svg style="left:549.2px;top:502.35px" width="3.400" height="2.400" viewBox="0 0 3.400 2.400"><path d="M0 0h3.400l-1.700 2.200z" fill="#333"/></svg>
<span class="t" style="left:522.40px;top:497.40px;font-size:7.3px;line-height:11.3px;height:11.3px;letter-spacing:0.118px;color:#222;-webkit-text-stroke:0.090px #222;">1.0</span>
<div style="left:567.5px;top:497px;width:86.5px;height:13.8px;background:linear-gradient(#edf2f8 0,#d3deeb 46%,#a9b8cf 54%,#bccade 100%);border:1px solid #7f93b0;border-radius:2.500px;box-shadow:inset 0 0 0 1px rgba(255,255,255,0.550);"></div>
<span class="t" style="left:578.91px;top:499.15px;font-size:7.3px;line-height:11.3px;height:11.3px;letter-spacing:0.310px;color:#1c1c1c;-webkit-text-stroke:0.090px #1c1c1c;">Find Library Items</span>
<div style="left:657.5px;top:497px;width:86.5px;height:13.8px;background:linear-gradient(#edf2f8 0,#d3deeb 46%,#a9b8cf 54%,#bccade 100%);border:1px solid #7f93b0;border-radius:2.500px;box-shadow:inset 0 0 0 1px rgba(255,255,255,0.550);"></div>
<span class="t" style="left:669.41px;top:499.15px;font-size:7.3px;line-height:11.3px;height:11.3px;letter-spacing:0.326px;color:#1c1c1c;-webkit-text-stroke:0.090px #1c1c1c;">IntelliBid Explorer</span>
<div style="left:89px;top:520px;width:943.5px;height:125px;background:#fff;border-top:1px solid #a7b0bd;border-right:1px solid #a7b0bd;"></div>
<div style="left:89px;top:637.3px;width:942.5px;height:7.7px;background:#f0f0f0;"></div>
<div style="left:99px;top:638.5px;width:582px;height:5.5px;background:#cdcdcd;"></div>
<svg style="left:91px;top:638px" width="5" height="7" viewBox="0 0 5 7"><path d="M4 0.500L1 3.500L4 6.500" stroke="#222" stroke-width="1.300" fill="none"/></svg>
<svg style="left:1025px;top:638px" width="5" height="7" viewBox="0 0 5 7"><path d="M1 0.500L4 3.500L1 6.500" stroke="#222" stroke-width="1.300" fill="none"/></svg>
<svg style="left:89.1px;top:521px" width="10" height="9.700" viewBox="0 0 10 9.700"><rect width="10" height="9.700" fill="#0e3432"/><rect width="10" height="2.200" fill="#10201f"/><rect x="1.300" y="3" width="1.500" height="6.200" fill="#127f6e"/><rect x="3" y="3" width="1.400" height="6.200" fill="#7f8c38"/><rect x="4.700" y="2.600" width="1.400" height="6.600" fill="#6f1c96"/><rect x="6.100" y="3" width="1" height="6.200" fill="#1a20b8"/><rect x="7.200" y="3.600" width="1.900" height="5.600" fill="#34bfe6"/><rect x="5.800" y="1.700" width="3.400" height="1.300" fill="#9a96b8"/><rect x="3" y="1.900" width="2.600" height="0.900" fill="#4a5a68"/></svg>
<span class="t" style="left:139.60px;top:521.05px;font-size:7.3px;line-height:11.3px;height:11.3px;letter-spacing:0.355px;color:#111;font-weight:bold;">WORK AREA</span>
<svg style="left:89.1px;top:532.27px" width="10" height="9.700" viewBox="0 0 10 9.700"><rect width="10" height="9.700" fill="#0e3432"/><rect width="10" height="2.200" fill="#10201f"/><rect x="1.300" y="3" width="1.500" height="6.200" fill="#127f6e"/><rect x="3" y="3" width="1.400" height="6.200" fill="#7f8c38"/><rect x="4.700" y="2.600" width="1.400" height="6.600" fill="#6f1c96"/><rect x="6.100" y="3" width="1" height="6.200" fill="#1a20b8"/><rect x="7.200" y="3.600" width="1.900" height="5.600" fill="#34bfe6"/><rect x="5.800" y="1.700" width="3.400" height="1.300" fill="#9a96b8"/><rect x="3" y="1.900" width="2.600" height="0.900" fill="#4a5a68"/></svg>
<span class="t" style="left:102.10px;top:532.82px;font-size:7.3px;line-height:11.3px;height:11.3px;letter-spacing:0.003px;color:#222;-webkit-text-stroke:0.090px #222;">WORK AREA- UTP GENERIC</span>
<svg style="left:89.1px;top:543.54px" width="10" height="9.700" viewBox="0 0 10 9.700"><rect width="10" height="9.700" fill="#0e3432"/><rect width="10" height="2.200" fill="#10201f"/><rect x="1.300" y="3" width="1.500" height="6.200" fill="#127f6e"/><rect x="3" y="3" width="1.400" height="6.200" fill="#7f8c38"/><rect x="4.700" y="2.600" width="1.400" height="6.600" fill="#6f1c96"/><rect x="6.100" y="3" width="1" height="6.200" fill="#1a20b8"/><rect x="7.200" y="3.600" width="1.900" height="5.600" fill="#34bfe6"/><rect x="5.800" y="1.700" width="3.400" height="1.300" fill="#9a96b8"/><rect x="3" y="1.900" width="2.600" height="0.900" fill="#4a5a68"/></svg>
<span class="t" style="left:102.10px;top:544.09px;font-size:7.3px;line-height:11.3px;height:11.3px;letter-spacing:0.032px;color:#222;-webkit-text-stroke:0.090px #222;">WORK AREA- COAX</span>
<svg style="left:89.1px;top:554.81px" width="10" height="9.700" viewBox="0 0 10 9.700"><rect width="10" height="9.700" fill="#0e3432"/><rect width="10" height="2.200" fill="#10201f"/><rect x="1.300" y="3" width="1.500" height="6.200" fill="#127f6e"/><rect x="3" y="3" width="1.400" height="6.200" fill="#7f8c38"/><rect x="4.700" y="2.600" width="1.400" height="6.600" fill="#6f1c96"/><rect x="6.100" y="3" width="1" height="6.200" fill="#1a20b8"/><rect x="7.200" y="3.600" width="1.900" height="5.600" fill="#34bfe6"/><rect x="5.800" y="1.700" width="3.400" height="1.300" fill="#9a96b8"/><rect x="3" y="1.900" width="2.600" height="0.900" fill="#4a5a68"/></svg>
<span class="t" style="left:102.10px;top:555.36px;font-size:7.3px;line-height:11.3px;height:11.3px;letter-spacing:0.048px;color:#222;-webkit-text-stroke:0.090px #222;">WORK AREA- FIBER</span>
<svg style="left:89.1px;top:566.08px" width="10" height="9.700" viewBox="0 0 10 9.700"><rect width="10" height="9.700" fill="#0e3432"/><rect width="10" height="2.200" fill="#10201f"/><rect x="1.300" y="3" width="1.500" height="6.200" fill="#127f6e"/><rect x="3" y="3" width="1.400" height="6.200" fill="#7f8c38"/><rect x="4.700" y="2.600" width="1.400" height="6.600" fill="#6f1c96"/><rect x="6.100" y="3" width="1" height="6.200" fill="#1a20b8"/><rect x="7.200" y="3.600" width="1.900" height="5.600" fill="#34bfe6"/><rect x="5.800" y="1.700" width="3.400" height="1.300" fill="#9a96b8"/><rect x="3" y="1.900" width="2.600" height="0.900" fill="#4a5a68"/></svg>
<span class="t" style="left:102.10px;top:566.63px;font-size:7.3px;line-height:11.3px;height:11.3px;letter-spacing:0.120px;color:#222;-webkit-text-stroke:0.090px #222;">WORK AREA- MIXED MEDIA</span>
<svg style="left:89.1px;top:577.35px" width="10" height="9.700" viewBox="0 0 10 9.700"><rect width="10" height="9.700" fill="#0e3432"/><rect width="10" height="2.200" fill="#10201f"/><rect x="1.300" y="3" width="1.500" height="6.200" fill="#127f6e"/><rect x="3" y="3" width="1.400" height="6.200" fill="#7f8c38"/><rect x="4.700" y="2.600" width="1.400" height="6.600" fill="#6f1c96"/><rect x="6.100" y="3" width="1" height="6.200" fill="#1a20b8"/><rect x="7.200" y="3.600" width="1.900" height="5.600" fill="#34bfe6"/><rect x="5.800" y="1.700" width="3.400" height="1.300" fill="#9a96b8"/><rect x="3" y="1.900" width="2.600" height="0.900" fill="#4a5a68"/></svg>
<span class="t" style="left:102.10px;top:577.90px;font-size:7.3px;line-height:11.3px;height:11.3px;letter-spacing:0.116px;color:#222;-webkit-text-stroke:0.090px #222;">CONSOLIDATION POINTS</span>
<svg style="left:89.1px;top:588.62px" width="10" height="9.700" viewBox="0 0 10 9.700"><rect width="10" height="9.700" fill="#0e3432"/><rect width="10" height="2.200" fill="#10201f"/><rect x="1.300" y="3" width="1.500" height="6.200" fill="#127f6e"/><rect x="3" y="3" width="1.400" height="6.200" fill="#7f8c38"/><rect x="4.700" y="2.600" width="1.400" height="6.600" fill="#6f1c96"/><rect x="6.100" y="3" width="1" height="6.200" fill="#1a20b8"/><rect x="7.200" y="3.600" width="1.900" height="5.600" fill="#34bfe6"/><rect x="5.800" y="1.700" width="3.400" height="1.300" fill="#9a96b8"/><rect x="3" y="1.900" width="2.600" height="0.900" fill="#4a5a68"/></svg>
<span class="t" style="left:102.10px;top:589.17px;font-size:7.3px;line-height:11.3px;height:11.3px;letter-spacing:0.182px;color:#222;-webkit-text-stroke:0.090px #222;">MDF/IDF/TR TERMINATIONS</span>
<svg style="left:89.1px;top:599.89px" width="10" height="9.700" viewBox="0 0 10 9.700"><rect width="10" height="9.700" fill="#0e3432"/><rect width="10" height="2.200" fill="#10201f"/><rect x="1.300" y="3" width="1.500" height="6.200" fill="#127f6e"/><rect x="3" y="3" width="1.400" height="6.200" fill="#7f8c38"/><rect x="4.700" y="2.600" width="1.400" height="6.600" fill="#6f1c96"/><rect x="6.100" y="3" width="1" height="6.200" fill="#1a20b8"/><rect x="7.200" y="3.600" width="1.900" height="5.600" fill="#34bfe6"/><rect x="5.800" y="1.700" width="3.400" height="1.300" fill="#9a96b8"/><rect x="3" y="1.900" width="2.600" height="0.900" fill="#4a5a68"/></svg>
<svg style="left:89.1px;top:611.16px" width="10" height="9.700" viewBox="0 0 10 9.700"><rect width="10" height="9.700" fill="#0e3432"/><rect width="10" height="2.200" fill="#10201f"/><rect x="1.300" y="3" width="1.500" height="6.200" fill="#127f6e"/><rect x="3" y="3" width="1.400" height="6.200" fill="#7f8c38"/><rect x="4.700" y="2.600" width="1.400" height="6.600" fill="#6f1c96"/><rect x="6.100" y="3" width="1" height="6.200" fill="#1a20b8"/><rect x="7.200" y="3.600" width="1.900" height="5.600" fill="#34bfe6"/><rect x="5.800" y="1.700" width="3.400" height="1.300" fill="#9a96b8"/><rect x="3" y="1.900" width="2.600" height="0.900" fill="#4a5a68"/></svg>
<svg style="left:89.1px;top:622.43px" width="10" height="9.700" viewBox="0 0 10 9.700"><rect width="10" height="9.700" fill="#0e3432"/><rect width="10" height="2.200" fill="#10201f"/><rect x="1.300" y="3" width="1.500" height="6.200" fill="#127f6e"/><rect x="3" y="3" width="1.400" height="6.200" fill="#7f8c38"/><rect x="4.700" y="2.600" width="1.400" height="6.600" fill="#6f1c96"/><rect x="6.100" y="3" width="1" height="6.200" fill="#1a20b8"/><rect x="7.200" y="3.600" width="1.900" height="5.600" fill="#34bfe6"/><rect x="5.800" y="1.700" width="3.400" height="1.300" fill="#9a96b8"/><rect x="3" y="1.900" width="2.600" height="0.900" fill="#4a5a68"/></svg>
<svg style="left:226.6px;top:521px" width="10" height="9.700" viewBox="0 0 10 9.700"><rect width="10" height="9.700" fill="#0e3432"/><rect width="10" height="2.200" fill="#10201f"/><rect x="1.300" y="3" width="1.500" height="6.200" fill="#127f6e"/><rect x="3" y="3" width="1.400" height="6.200" fill="#7f8c38"/><rect x="4.700" y="2.600" width="1.400" height="6.600" fill="#6f1c96"/><rect x="6.100" y="3" width="1" height="6.200" fill="#1a20b8"/><rect x="7.200" y="3.600" width="1.900" height="5.600" fill="#34bfe6"/><rect x="5.800" y="1.700" width="3.400" height="1.300" fill="#9a96b8"/><rect x="3" y="1.900" width="2.600" height="0.900" fill="#4a5a68"/></svg>
<span class="t" style="left:277.10px;top:521.05px;font-size:7.3px;line-height:11.3px;height:11.3px;letter-spacing:0.355px;color:#111;font-weight:bold;">WORK AREA</span>
<svg style="left:226.6px;top:532.27px" width="10" height="9.700" viewBox="0 0 10 9.700"><rect width="10" height="9.700" fill="#0e3432"/><rect width="10" height="2.200" fill="#10201f"/><rect x="1.300" y="3" width="1.500" height="6.200" fill="#127f6e"/><rect x="3" y="3" width="1.400" height="6.200" fill="#7f8c38"/><rect x="4.700" y="2.600" width="1.400" height="6.600" fill="#6f1c96"/><rect x="6.100" y="3" width="1" height="6.200" fill="#1a20b8"/><rect x="7.200" y="3.600" width="1.900" height="5.600" fill="#34bfe6"/><rect x="5.800" y="1.700" width="3.400" height="1.300" fill="#9a96b8"/><rect x="3" y="1.900" width="2.600" height="0.900" fill="#4a5a68"/></svg>
<span class="t" style="left:239.60px;top:532.82px;font-size:7.3px;line-height:11.3px;height:11.3px;letter-spacing:0.277px;color:#222;-webkit-text-stroke:0.090px #222;">VOICE / DATA / STUBS</span>
<svg style="left:226.6px;top:543.54px" width="10" height="9.700" viewBox="0 0 10 9.700"><rect width="10" height="9.700" fill="#0e3432"/><rect width="10" height="2.200" fill="#10201f"/><rect x="1.300" y="3" width="1.500" height="6.200" fill="#127f6e"/><rect x="3" y="3" width="1.400" height="6.200" fill="#7f8c38"/><rect x="4.700" y="2.600" width="1.400" height="6.600" fill="#6f1c96"/><rect x="6.100" y="3" width="1" height="6.200" fill="#1a20b8"/><rect x="7.200" y="3.600" width="1.900" height="5.600" fill="#34bfe6"/><rect x="5.800" y="1.700" width="3.400" height="1.300" fill="#9a96b8"/><rect x="3" y="1.900" width="2.600" height="0.900" fill="#4a5a68"/></svg>
<span class="t" style="left:239.60px;top:544.09px;font-size:7.3px;line-height:11.3px;height:11.3px;letter-spacing:-0.096px;color:#222;-webkit-text-stroke:0.090px #222;">RACEWAYS</span>
<svg style="left:226.6px;top:554.81px" width="10" height="9.700" viewBox="0 0 10 9.700"><rect width="10" height="9.700" fill="#0e3432"/><rect width="10" height="2.200" fill="#10201f"/><rect x="1.300" y="3" width="1.500" height="6.200" fill="#127f6e"/><rect x="3" y="3" width="1.400" height="6.200" fill="#7f8c38"/><rect x="4.700" y="2.600" width="1.400" height="6.600" fill="#6f1c96"/><rect x="6.100" y="3" width="1" height="6.200" fill="#1a20b8"/><rect x="7.200" y="3.600" width="1.900" height="5.600" fill="#34bfe6"/><rect x="5.800" y="1.700" width="3.400" height="1.300" fill="#9a96b8"/><rect x="3" y="1.900" width="2.600" height="0.900" fill="#4a5a68"/></svg>
<span class="t" style="left:239.60px;top:555.36px;font-size:7.3px;line-height:11.3px;height:11.3px;letter-spacing:0.079px;color:#222;-webkit-text-stroke:0.090px #222;">J-HOOKS &amp; ASSEMBLIES</span>
<svg style="left:226.6px;top:566.08px" width="10" height="9.700" viewBox="0 0 10 9.700"><rect width="10" height="9.700" fill="#0e3432"/><rect width="10" height="2.200" fill="#10201f"/><rect x="1.300" y="3" width="1.500" height="6.200" fill="#127f6e"/><rect x="3" y="3" width="1.400" height="6.200" fill="#7f8c38"/><rect x="4.700" y="2.600" width="1.400" height="6.600" fill="#6f1c96"/><rect x="6.100" y="3" width="1" height="6.200" fill="#1a20b8"/><rect x="7.200" y="3.600" width="1.900" height="5.600" fill="#34bfe6"/><rect x="5.800" y="1.700" width="3.400" height="1.300" fill="#9a96b8"/><rect x="3" y="1.900" width="2.600" height="0.900" fill="#4a5a68"/></svg>
<span class="t" style="left:239.60px;top:566.63px;font-size:7.3px;line-height:11.3px;height:11.3px;letter-spacing:0.039px;color:#222;-webkit-text-stroke:0.090px #222;">INTRA-BLDG BACKBONE</span>
<svg style="left:226.6px;top:577.35px" width="10" height="9.700" viewBox="0 0 10 9.700"><rect width="10" height="9.700" fill="#0e3432"/><rect width="10" height="2.200" fill="#10201f"/><rect x="1.300" y="3" width="1.500" height="6.200" fill="#127f6e"/><rect x="3" y="3" width="1.400" height="6.200" fill="#7f8c38"/><rect x="4.700" y="2.600" width="1.400" height="6.600" fill="#6f1c96"/><rect x="6.100" y="3" width="1" height="6.200" fill="#1a20b8"/><rect x="7.200" y="3.600" width="1.900" height="5.600" fill="#34bfe6"/><rect x="5.800" y="1.700" width="3.400" height="1.300" fill="#9a96b8"/><rect x="3" y="1.900" width="2.600" height="0.900" fill="#4a5a68"/></svg>
<span class="t" style="left:288.97px;top:577.40px;font-size:7.3px;line-height:11.3px;height:11.3px;letter-spacing:0.590px;color:#111;font-weight:bold;">ITEMS</span>
<svg style="left:226.6px;top:588.62px" width="10" height="9.700" viewBox="0 0 10 9.700"><rect width="10" height="9.700" fill="#0e3432"/><rect width="10" height="2.200" fill="#10201f"/><rect x="1.300" y="3" width="1.500" height="6.200" fill="#127f6e"/><rect x="3" y="3" width="1.400" height="6.200" fill="#7f8c38"/><rect x="4.700" y="2.600" width="1.400" height="6.600" fill="#6f1c96"/><rect x="6.100" y="3" width="1" height="6.200" fill="#1a20b8"/><rect x="7.200" y="3.600" width="1.900" height="5.600" fill="#34bfe6"/><rect x="5.800" y="1.700" width="3.400" height="1.300" fill="#9a96b8"/><rect x="3" y="1.900" width="2.600" height="0.900" fill="#4a5a68"/></svg>
<span class="t" style="left:239.60px;top:589.17px;font-size:7.3px;line-height:11.3px;height:11.3px;letter-spacing:0.124px;color:#222;-webkit-text-stroke:0.090px #222;">MISC ITEMS</span>
<svg style="left:226.6px;top:599.89px" width="10" height="9.700" viewBox="0 0 10 9.700"><rect width="10" height="9.700" fill="#0e3432"/><rect width="10" height="2.200" fill="#10201f"/><rect x="1.300" y="3" width="1.500" height="6.200" fill="#127f6e"/><rect x="3" y="3" width="1.400" height="6.200" fill="#7f8c38"/><rect x="4.700" y="2.600" width="1.400" height="6.600" fill="#6f1c96"/><rect x="6.100" y="3" width="1" height="6.200" fill="#1a20b8"/><rect x="7.200" y="3.600" width="1.900" height="5.600" fill="#34bfe6"/><rect x="5.800" y="1.700" width="3.400" height="1.300" fill="#9a96b8"/><rect x="3" y="1.900" width="2.600" height="0.900" fill="#4a5a68"/></svg>
<span class="t" style="left:239.60px;top:600.44px;font-size:7.3px;line-height:11.3px;height:11.3px;letter-spacing:-0.085px;color:#222;-webkit-text-stroke:0.090px #222;">HANGERS &amp; SUPPORTS</span>
<svg style="left:226.6px;top:611.16px" width="10" height="9.700" viewBox="0 0 10 9.700"><rect width="10" height="9.700" fill="#0e3432"/><rect width="10" height="2.200" fill="#10201f"/><rect x="1.300" y="3" width="1.500" height="6.200" fill="#127f6e"/><rect x="3" y="3" width="1.400" height="6.200" fill="#7f8c38"/><rect x="4.700" y="2.600" width="1.400" height="6.600" fill="#6f1c96"/><rect x="6.100" y="3" width="1" height="6.200" fill="#1a20b8"/><rect x="7.200" y="3.600" width="1.900" height="5.600" fill="#34bfe6"/><rect x="5.800" y="1.700" width="3.400" height="1.300" fill="#9a96b8"/><rect x="3" y="1.900" width="2.600" height="0.900" fill="#4a5a68"/></svg>
<span class="t" style="left:239.60px;top:611.71px;font-size:7.3px;line-height:11.3px;height:11.3px;letter-spacing:0.087px;color:#222;-webkit-text-stroke:0.090px #222;">PULL BOX / JUNCTION BOX</span>
<svg style="left:226.6px;top:622.43px" width="10" height="9.700" viewBox="0 0 10 9.700"><rect width="10" height="9.700" fill="#0e3432"/><rect width="10" height="2.200" fill="#10201f"/><rect x="1.300" y="3" width="1.500" height="6.200" fill="#127f6e"/><rect x="3" y="3" width="1.400" height="6.200" fill="#7f8c38"/><rect x="4.700" y="2.600" width="1.400" height="6.600" fill="#6f1c96"/><rect x="6.100" y="3" width="1" height="6.200" fill="#1a20b8"/><rect x="7.200" y="3.600" width="1.900" height="5.600" fill="#34bfe6"/><rect x="5.800" y="1.700" width="3.400" height="1.300" fill="#9a96b8"/><rect x="3" y="1.900" width="2.600" height="0.900" fill="#4a5a68"/></svg>
<span class="t" style="left:239.60px;top:622.98px;font-size:7.3px;line-height:11.3px;height:11.3px;letter-spacing:-0.112px;color:#222;-webkit-text-stroke:0.090px #222;">FIRESTOP</span>
<svg style="left:364.1px;top:521px" width="10" height="9.700" viewBox="0 0 10 9.700"><rect width="10" height="9.700" fill="#0e3432"/><rect width="10" height="2.200" fill="#10201f"/><rect x="1.300" y="3" width="1.500" height="6.200" fill="#127f6e"/><rect x="3" y="3" width="1.400" height="6.200" fill="#7f8c38"/><rect x="4.700" y="2.600" width="1.400" height="6.600" fill="#6f1c96"/><rect x="6.100" y="3" width="1" height="6.200" fill="#1a20b8"/><rect x="7.200" y="3.600" width="1.900" height="5.600" fill="#34bfe6"/><rect x="5.800" y="1.700" width="3.400" height="1.300" fill="#9a96b8"/><rect x="3" y="1.900" width="2.600" height="0.900" fill="#4a5a68"/></svg>
<span class="t" style="left:426.47px;top:521.05px;font-size:7.3px;line-height:11.3px;height:11.3px;letter-spacing:0.590px;color:#111;font-weight:bold;">ITEMS</span>
<svg style="left:364.1px;top:532.27px" width="10" height="9.700" viewBox="0 0 10 9.700"><rect width="10" height="9.700" fill="#0e3432"/><rect width="10" height="2.200" fill="#10201f"/><rect x="1.300" y="3" width="1.500" height="6.200" fill="#127f6e"/><rect x="3" y="3" width="1.400" height="6.200" fill="#7f8c38"/><rect x="4.700" y="2.600" width="1.400" height="6.600" fill="#6f1c96"/><rect x="6.100" y="3" width="1" height="6.200" fill="#1a20b8"/><rect x="7.200" y="3.600" width="1.900" height="5.600" fill="#34bfe6"/><rect x="5.800" y="1.700" width="3.400" height="1.300" fill="#9a96b8"/><rect x="3" y="1.900" width="2.600" height="0.900" fill="#4a5a68"/></svg>
<span class="t" style="left:377.10px;top:532.82px;font-size:7.3px;line-height:11.3px;height:11.3px;letter-spacing:0.084px;color:#222;-webkit-text-stroke:0.090px #222;">WIREWAY &amp; TROUGH</span>
<svg style="left:364.1px;top:543.54px" width="10" height="9.700" viewBox="0 0 10 9.700"><rect width="10" height="9.700" fill="#0e3432"/><rect width="10" height="2.200" fill="#10201f"/><rect x="1.300" y="3" width="1.500" height="6.200" fill="#127f6e"/><rect x="3" y="3" width="1.400" height="6.200" fill="#7f8c38"/><rect x="4.700" y="2.600" width="1.400" height="6.600" fill="#6f1c96"/><rect x="6.100" y="3" width="1" height="6.200" fill="#1a20b8"/><rect x="7.200" y="3.600" width="1.900" height="5.600" fill="#34bfe6"/><rect x="5.800" y="1.700" width="3.400" height="1.300" fill="#9a96b8"/><rect x="3" y="1.900" width="2.600" height="0.900" fill="#4a5a68"/></svg>
<span class="t" style="left:377.10px;top:544.09px;font-size:7.3px;line-height:11.3px;height:11.3px;letter-spacing:-0.067px;color:#222;-webkit-text-stroke:0.090px #222;">STRUT CHANNEL</span>
<svg style="left:364.1px;top:554.81px" width="10" height="9.700" viewBox="0 0 10 9.700"><rect width="10" height="9.700" fill="#0e3432"/><rect width="10" height="2.200" fill="#10201f"/><rect x="1.300" y="3" width="1.500" height="6.200" fill="#127f6e"/><rect x="3" y="3" width="1.400" height="6.200" fill="#7f8c38"/><rect x="4.700" y="2.600" width="1.400" height="6.600" fill="#6f1c96"/><rect x="6.100" y="3" width="1" height="6.200" fill="#1a20b8"/><rect x="7.200" y="3.600" width="1.900" height="5.600" fill="#34bfe6"/><rect x="5.800" y="1.700" width="3.400" height="1.300" fill="#9a96b8"/><rect x="3" y="1.900" width="2.600" height="0.900" fill="#4a5a68"/></svg>
<span class="t" style="left:377.10px;top:555.36px;font-size:7.3px;line-height:11.3px;height:11.3px;letter-spacing:0.062px;color:#222;-webkit-text-stroke:0.090px #222;">CADDY BOX &amp; DEVICE</span>
<svg style="left:364.1px;top:566.08px" width="10" height="9.700" viewBox="0 0 10 9.700"><rect width="10" height="9.700" fill="#0e3432"/><rect width="10" height="2.200" fill="#10201f"/><rect x="1.300" y="3" width="1.500" height="6.200" fill="#127f6e"/><rect x="3" y="3" width="1.400" height="6.200" fill="#7f8c38"/><rect x="4.700" y="2.600" width="1.400" height="6.600" fill="#6f1c96"/><rect x="6.100" y="3" width="1" height="6.200" fill="#1a20b8"/><rect x="7.200" y="3.600" width="1.900" height="5.600" fill="#34bfe6"/><rect x="5.800" y="1.700" width="3.400" height="1.300" fill="#9a96b8"/><rect x="3" y="1.900" width="2.600" height="0.900" fill="#4a5a68"/></svg>
<span class="t" style="left:377.10px;top:566.63px;font-size:7.3px;line-height:11.3px;height:11.3px;letter-spacing:-0.057px;color:#222;-webkit-text-stroke:0.090px #222;">CADDY CABLE HGR</span>
<svg style="left:364.1px;top:577.35px" width="10" height="9.700" viewBox="0 0 10 9.700"><rect width="10" height="9.700" fill="#0e3432"/><rect width="10" height="2.200" fill="#10201f"/><rect x="1.300" y="3" width="1.500" height="6.200" fill="#127f6e"/><rect x="3" y="3" width="1.400" height="6.200" fill="#7f8c38"/><rect x="4.700" y="2.600" width="1.400" height="6.600" fill="#6f1c96"/><rect x="6.100" y="3" width="1" height="6.200" fill="#1a20b8"/><rect x="7.200" y="3.600" width="1.900" height="5.600" fill="#34bfe6"/><rect x="5.800" y="1.700" width="3.400" height="1.300" fill="#9a96b8"/><rect x="3" y="1.900" width="2.600" height="0.900" fill="#4a5a68"/></svg>
<span class="t" style="left:377.10px;top:577.90px;font-size:7.3px;line-height:11.3px;height:11.3px;letter-spacing:0.041px;color:#222;-webkit-text-stroke:0.090px #222;">CADDY CONDUIT HGR</span>
<svg style="left:364.1px;top:588.62px" width="10" height="9.700" viewBox="0 0 10 9.700"><rect width="10" height="9.700" fill="#0e3432"/><rect width="10" height="2.200" fill="#10201f"/><rect x="1.300" y="3" width="1.500" height="6.200" fill="#127f6e"/><rect x="3" y="3" width="1.400" height="6.200" fill="#7f8c38"/><rect x="4.700" y="2.600" width="1.400" height="6.600" fill="#6f1c96"/><rect x="6.100" y="3" width="1" height="6.200" fill="#1a20b8"/><rect x="7.200" y="3.600" width="1.900" height="5.600" fill="#34bfe6"/><rect x="5.800" y="1.700" width="3.400" height="1.300" fill="#9a96b8"/><rect x="3" y="1.900" width="2.600" height="0.900" fill="#4a5a68"/></svg>
<span class="t" style="left:377.10px;top:589.17px;font-size:7.3px;line-height:11.3px;height:11.3px;letter-spacing:0.079px;color:#222;-webkit-text-stroke:0.090px #222;">SPIRAL WRAP/TUBING</span>
<svg style="left:364.1px;top:599.89px" width="10" height="9.700" viewBox="0 0 10 9.700"><rect width="10" height="9.700" fill="#0e3432"/><rect width="10" height="2.200" fill="#10201f"/><rect x="1.300" y="3" width="1.500" height="6.200" fill="#127f6e"/><rect x="3" y="3" width="1.400" height="6.200" fill="#7f8c38"/><rect x="4.700" y="2.600" width="1.400" height="6.600" fill="#6f1c96"/><rect x="6.100" y="3" width="1" height="6.200" fill="#1a20b8"/><rect x="7.200" y="3.600" width="1.900" height="5.600" fill="#34bfe6"/><rect x="5.800" y="1.700" width="3.400" height="1.300" fill="#9a96b8"/><rect x="3" y="1.900" width="2.600" height="0.900" fill="#4a5a68"/></svg>
<span class="t" style="left:377.10px;top:600.44px;font-size:7.3px;line-height:11.3px;height:11.3px;letter-spacing:-0.070px;color:#222;-webkit-text-stroke:0.090px #222;">BACKBOARDS</span>
<svg style="left:364.1px;top:611.16px" width="10" height="9.700" viewBox="0 0 10 9.700"><rect width="10" height="9.700" fill="#0e3432"/><rect width="10" height="2.200" fill="#10201f"/><rect x="1.300" y="3" width="1.500" height="6.200" fill="#127f6e"/><rect x="3" y="3" width="1.400" height="6.200" fill="#7f8c38"/><rect x="4.700" y="2.600" width="1.400" height="6.600" fill="#6f1c96"/><rect x="6.100" y="3" width="1" height="6.200" fill="#1a20b8"/><rect x="7.200" y="3.600" width="1.900" height="5.600" fill="#34bfe6"/><rect x="5.800" y="1.700" width="3.400" height="1.300" fill="#9a96b8"/><rect x="3" y="1.900" width="2.600" height="0.900" fill="#4a5a68"/></svg>
<svg style="left:364.1px;top:622.43px" width="10" height="9.700" viewBox="0 0 10 9.700"><rect width="10" height="9.700" fill="#0e3432"/><rect width="10" height="2.200" fill="#10201f"/><rect x="1.300" y="3" width="1.500" height="6.200" fill="#127f6e"/><rect x="3" y="3" width="1.400" height="6.200" fill="#7f8c38"/><rect x="4.700" y="2.600" width="1.400" height="6.600" fill="#6f1c96"/><rect x="6.100" y="3" width="1" height="6.200" fill="#1a20b8"/><rect x="7.200" y="3.600" width="1.900" height="5.600" fill="#34bfe6"/><rect x="5.800" y="1.700" width="3.400" height="1.300" fill="#9a96b8"/><rect x="3" y="1.900" width="2.600" height="0.900" fill="#4a5a68"/></svg>
<svg style="left:501.6px;top:521px" width="10" height="9.700" viewBox="0 0 10 9.700"><rect width="10" height="9.700" fill="#0e3432"/><rect width="10" height="2.200" fill="#10201f"/><rect x="1.300" y="3" width="1.500" height="6.200" fill="#127f6e"/><rect x="3" y="3" width="1.400" height="6.200" fill="#7f8c38"/><rect x="4.700" y="2.600" width="1.400" height="6.600" fill="#6f1c96"/><rect x="6.100" y="3" width="1" height="6.200" fill="#1a20b8"/><rect x="7.200" y="3.600" width="1.900" height="5.600" fill="#34bfe6"/><rect x="5.800" y="1.700" width="3.400" height="1.300" fill="#9a96b8"/><rect x="3" y="1.900" width="2.600" height="0.900" fill="#4a5a68"/></svg>
<span class="t" style="left:552.01px;top:521.05px;font-size:7.3px;line-height:11.3px;height:11.3px;letter-spacing:0.246px;color:#111;font-weight:bold;">CABLE TRAY</span>
<svg style="left:501.6px;top:532.27px" width="10" height="9.700" viewBox="0 0 10 9.700"><rect width="10" height="9.700" fill="#0e3432"/><rect width="10" height="2.200" fill="#10201f"/><rect x="1.300" y="3" width="1.500" height="6.200" fill="#127f6e"/><rect x="3" y="3" width="1.400" height="6.200" fill="#7f8c38"/><rect x="4.700" y="2.600" width="1.400" height="6.600" fill="#6f1c96"/><rect x="6.100" y="3" width="1" height="6.200" fill="#1a20b8"/><rect x="7.200" y="3.600" width="1.900" height="5.600" fill="#34bfe6"/><rect x="5.800" y="1.700" width="3.400" height="1.300" fill="#9a96b8"/><rect x="3" y="1.900" width="2.600" height="0.900" fill="#4a5a68"/></svg>
<span class="t" style="left:514.60px;top:532.82px;font-size:7.3px;line-height:11.3px;height:11.3px;letter-spacing:0.012px;color:#222;-webkit-text-stroke:0.090px #222;">CABLE TRAY-ALUM LADDER</span>
<svg style="left:501.6px;top:543.54px" width="10" height="9.700" viewBox="0 0 10 9.700"><rect width="10" height="9.700" fill="#0e3432"/><rect width="10" height="2.200" fill="#10201f"/><rect x="1.300" y="3" width="1.500" height="6.200" fill="#127f6e"/><rect x="3" y="3" width="1.400" height="6.200" fill="#7f8c38"/><rect x="4.700" y="2.600" width="1.400" height="6.600" fill="#6f1c96"/><rect x="6.100" y="3" width="1" height="6.200" fill="#1a20b8"/><rect x="7.200" y="3.600" width="1.900" height="5.600" fill="#34bfe6"/><rect x="5.800" y="1.700" width="3.400" height="1.300" fill="#9a96b8"/><rect x="3" y="1.900" width="2.600" height="0.900" fill="#4a5a68"/></svg>
<span class="t" style="left:514.60px;top:544.09px;font-size:7.3px;line-height:11.3px;height:11.3px;letter-spacing:0.031px;color:#222;-webkit-text-stroke:0.090px #222;">CABLE TRAY-STL LADDER</span>
<svg style="left:501.6px;top:554.81px" width="10" height="9.700" viewBox="0 0 10 9.700"><rect width="10" height="9.700" fill="#0e3432"/><rect width="10" height="2.200" fill="#10201f"/><rect x="1.300" y="3" width="1.500" height="6.200" fill="#127f6e"/><rect x="3" y="3" width="1.400" height="6.200" fill="#7f8c38"/><rect x="4.700" y="2.600" width="1.400" height="6.600" fill="#6f1c96"/><rect x="6.100" y="3" width="1" height="6.200" fill="#1a20b8"/><rect x="7.200" y="3.600" width="1.900" height="5.600" fill="#34bfe6"/><rect x="5.800" y="1.700" width="3.400" height="1.300" fill="#9a96b8"/><rect x="3" y="1.900" width="2.600" height="0.900" fill="#4a5a68"/></svg>
<span class="t" style="left:514.60px;top:555.36px;font-size:7.3px;line-height:11.3px;height:11.3px;letter-spacing:0.068px;color:#222;-webkit-text-stroke:0.090px #222;">CABLE TRAY-  SS LADDER</span>
<svg style="left:501.6px;top:566.08px" width="10" height="9.700" viewBox="0 0 10 9.700"><rect width="10" height="9.700" fill="#0e3432"/><rect width="10" height="2.200" fill="#10201f"/><rect x="1.300" y="3" width="1.500" height="6.200" fill="#127f6e"/><rect x="3" y="3" width="1.400" height="6.200" fill="#7f8c38"/><rect x="4.700" y="2.600" width="1.400" height="6.600" fill="#6f1c96"/><rect x="6.100" y="3" width="1" height="6.200" fill="#1a20b8"/><rect x="7.200" y="3.600" width="1.900" height="5.600" fill="#34bfe6"/><rect x="5.800" y="1.700" width="3.400" height="1.300" fill="#9a96b8"/><rect x="3" y="1.900" width="2.600" height="0.900" fill="#4a5a68"/></svg>
<span class="t" style="left:514.60px;top:566.63px;font-size:7.3px;line-height:11.3px;height:11.3px;letter-spacing:0.030px;color:#222;-webkit-text-stroke:0.090px #222;">CABLE TRAY- FGL LADDER</span>
<svg style="left:501.6px;top:577.35px" width="10" height="9.700" viewBox="0 0 10 9.700"><rect width="10" height="9.700" fill="#0e3432"/><rect width="10" height="2.200" fill="#10201f"/><rect x="1.300" y="3" width="1.500" height="6.200" fill="#127f6e"/><rect x="3" y="3" width="1.400" height="6.200" fill="#7f8c38"/><rect x="4.700" y="2.600" width="1.400" height="6.600" fill="#6f1c96"/><rect x="6.100" y="3" width="1" height="6.200" fill="#1a20b8"/><rect x="7.200" y="3.600" width="1.900" height="5.600" fill="#34bfe6"/><rect x="5.800" y="1.700" width="3.400" height="1.300" fill="#9a96b8"/><rect x="3" y="1.900" width="2.600" height="0.900" fill="#4a5a68"/></svg>
<span class="t" style="left:514.60px;top:577.90px;font-size:7.3px;line-height:11.3px;height:11.3px;letter-spacing:0.063px;color:#222;-webkit-text-stroke:0.090px #222;">CABLE TRAY-</span>
<span class="t" style="left:586.50px;top:577.90px;font-size:7.3px;line-height:11.3px;height:11.3px;letter-spacing:-0.125px;color:#222;-webkit-text-stroke:0.090px #222;">MESH</span>
<svg style="left:501.6px;top:588.62px" width="10" height="9.700" viewBox="0 0 10 9.700"><rect width="10" height="9.700" fill="#0e3432"/><rect width="10" height="2.200" fill="#10201f"/><rect x="1.300" y="3" width="1.500" height="6.200" fill="#127f6e"/><rect x="3" y="3" width="1.400" height="6.200" fill="#7f8c38"/><rect x="4.700" y="2.600" width="1.400" height="6.600" fill="#6f1c96"/><rect x="6.100" y="3" width="1" height="6.200" fill="#1a20b8"/><rect x="7.200" y="3.600" width="1.900" height="5.600" fill="#34bfe6"/><rect x="5.800" y="1.700" width="3.400" height="1.300" fill="#9a96b8"/><rect x="3" y="1.900" width="2.600" height="0.900" fill="#4a5a68"/></svg>
<span class="t" style="left:514.60px;top:589.17px;font-size:7.3px;line-height:11.3px;height:11.3px;letter-spacing:0.024px;color:#222;-webkit-text-stroke:0.090px #222;">CABLE TRAY-STL TROUGH</span>
<svg style="left:501.6px;top:599.89px" width="10" height="9.700" viewBox="0 0 10 9.700"><rect width="10" height="9.700" fill="#0e3432"/><rect width="10" height="2.200" fill="#10201f"/><rect x="1.300" y="3" width="1.500" height="6.200" fill="#127f6e"/><rect x="3" y="3" width="1.400" height="6.200" fill="#7f8c38"/><rect x="4.700" y="2.600" width="1.400" height="6.600" fill="#6f1c96"/><rect x="6.100" y="3" width="1" height="6.200" fill="#1a20b8"/><rect x="7.200" y="3.600" width="1.900" height="5.600" fill="#34bfe6"/><rect x="5.800" y="1.700" width="3.400" height="1.300" fill="#9a96b8"/><rect x="3" y="1.900" width="2.600" height="0.900" fill="#4a5a68"/></svg>
<span class="t" style="left:514.60px;top:600.44px;font-size:7.3px;line-height:11.3px;height:11.3px;letter-spacing:0.036px;color:#222;-webkit-text-stroke:0.090px #222;">CABLE TRAY-SOL BOTTOM</span>
<svg style="left:501.6px;top:611.16px" width="10" height="9.700" viewBox="0 0 10 9.700"><rect width="10" height="9.700" fill="#0e3432"/><rect width="10" height="2.200" fill="#10201f"/><rect x="1.300" y="3" width="1.500" height="6.200" fill="#127f6e"/><rect x="3" y="3" width="1.400" height="6.200" fill="#7f8c38"/><rect x="4.700" y="2.600" width="1.400" height="6.600" fill="#6f1c96"/><rect x="6.100" y="3" width="1" height="6.200" fill="#1a20b8"/><rect x="7.200" y="3.600" width="1.900" height="5.600" fill="#34bfe6"/><rect x="5.800" y="1.700" width="3.400" height="1.300" fill="#9a96b8"/><rect x="3" y="1.900" width="2.600" height="0.900" fill="#4a5a68"/></svg>
<span class="t" style="left:514.60px;top:611.71px;font-size:7.3px;line-height:11.3px;height:11.3px;letter-spacing:0.078px;color:#222;-webkit-text-stroke:0.090px #222;">CABLE TRAY-MISC</span>
<svg style="left:501.6px;top:622.43px" width="10" height="9.700" viewBox="0 0 10 9.700"><rect width="10" height="9.700" fill="#0e3432"/><rect width="10" height="2.200" fill="#10201f"/><rect x="1.300" y="3" width="1.500" height="6.200" fill="#127f6e"/><rect x="3" y="3" width="1.400" height="6.200" fill="#7f8c38"/><rect x="4.700" y="2.600" width="1.400" height="6.600" fill="#6f1c96"/><rect x="6.100" y="3" width="1" height="6.200" fill="#1a20b8"/><rect x="7.200" y="3.600" width="1.900" height="5.600" fill="#34bfe6"/><rect x="5.800" y="1.700" width="3.400" height="1.300" fill="#9a96b8"/><rect x="3" y="1.900" width="2.600" height="0.900" fill="#4a5a68"/></svg>
<svg style="left:639.1px;top:521px" width="10" height="9.700" viewBox="0 0 10 9.700"><rect width="10" height="9.700" fill="#0e3432"/><rect width="10" height="2.200" fill="#10201f"/><rect x="1.300" y="3" width="1.500" height="6.200" fill="#127f6e"/><rect x="3" y="3" width="1.400" height="6.200" fill="#7f8c38"/><rect x="4.700" y="2.600" width="1.400" height="6.600" fill="#6f1c96"/><rect x="6.100" y="3" width="1" height="6.200" fill="#1a20b8"/><rect x="7.200" y="3.600" width="1.900" height="5.600" fill="#34bfe6"/><rect x="5.800" y="1.700" width="3.400" height="1.300" fill="#9a96b8"/><rect x="3" y="1.900" width="2.600" height="0.900" fill="#4a5a68"/></svg>
<span class="t" style="left:703.75px;top:521.05px;font-size:7.3px;line-height:11.3px;height:11.3px;letter-spacing:0.617px;color:#111;font-weight:bold;">MISC</span>
<svg style="left:639.1px;top:532.27px" width="10" height="9.700" viewBox="0 0 10 9.700"><rect width="10" height="9.700" fill="#0e3432"/><rect width="10" height="2.200" fill="#10201f"/><rect x="1.300" y="3" width="1.500" height="6.200" fill="#127f6e"/><rect x="3" y="3" width="1.400" height="6.200" fill="#7f8c38"/><rect x="4.700" y="2.600" width="1.400" height="6.600" fill="#6f1c96"/><rect x="6.100" y="3" width="1" height="6.200" fill="#1a20b8"/><rect x="7.200" y="3.600" width="1.900" height="5.600" fill="#34bfe6"/><rect x="5.800" y="1.700" width="3.400" height="1.300" fill="#9a96b8"/><rect x="3" y="1.900" width="2.600" height="0.900" fill="#4a5a68"/></svg>
<span class="t" style="left:652.10px;top:532.82px;font-size:7.3px;line-height:11.3px;height:11.3px;letter-spacing:-0.030px;color:#222;-webkit-text-stroke:0.090px #222;">SNAKE TRAY CABLE MGMT</span>
<svg style="left:639.1px;top:543.54px" width="10" height="9.700" viewBox="0 0 10 9.700"><rect width="10" height="9.700" fill="#0e3432"/><rect width="10" height="2.200" fill="#10201f"/><rect x="1.300" y="3" width="1.500" height="6.200" fill="#127f6e"/><rect x="3" y="3" width="1.400" height="6.200" fill="#7f8c38"/><rect x="4.700" y="2.600" width="1.400" height="6.600" fill="#6f1c96"/><rect x="6.100" y="3" width="1" height="6.200" fill="#1a20b8"/><rect x="7.200" y="3.600" width="1.900" height="5.600" fill="#34bfe6"/><rect x="5.800" y="1.700" width="3.400" height="1.300" fill="#9a96b8"/><rect x="3" y="1.900" width="2.600" height="0.900" fill="#4a5a68"/></svg>
<span class="t" style="left:652.10px;top:544.09px;font-size:7.3px;line-height:11.3px;height:11.3px;letter-spacing:-0.020px;color:#222;-webkit-text-stroke:0.090px #222;">CABLOFIL CABLE MGMT</span>
<svg style="left:639.1px;top:554.81px" width="10" height="9.700" viewBox="0 0 10 9.700"><rect width="10" height="9.700" fill="#0e3432"/><rect width="10" height="2.200" fill="#10201f"/><rect x="1.300" y="3" width="1.500" height="6.200" fill="#127f6e"/><rect x="3" y="3" width="1.400" height="6.200" fill="#7f8c38"/><rect x="4.700" y="2.600" width="1.400" height="6.600" fill="#6f1c96"/><rect x="6.100" y="3" width="1" height="6.200" fill="#1a20b8"/><rect x="7.200" y="3.600" width="1.900" height="5.600" fill="#34bfe6"/><rect x="5.800" y="1.700" width="3.400" height="1.300" fill="#9a96b8"/><rect x="3" y="1.900" width="2.600" height="0.900" fill="#4a5a68"/></svg>
<span class="t" style="left:652.10px;top:555.36px;font-size:7.3px;line-height:11.3px;height:11.3px;letter-spacing:-0.001px;color:#222;-webkit-text-stroke:0.090px #222;">MISCELLANEOUS ITEMS</span>
<svg style="left:639.1px;top:566.08px" width="10" height="9.700" viewBox="0 0 10 9.700"><rect width="10" height="9.700" fill="#0e3432"/><rect width="10" height="2.200" fill="#10201f"/><rect x="1.300" y="3" width="1.500" height="6.200" fill="#127f6e"/><rect x="3" y="3" width="1.400" height="6.200" fill="#7f8c38"/><rect x="4.700" y="2.600" width="1.400" height="6.600" fill="#6f1c96"/><rect x="6.100" y="3" width="1" height="6.200" fill="#1a20b8"/><rect x="7.200" y="3.600" width="1.900" height="5.600" fill="#34bfe6"/><rect x="5.800" y="1.700" width="3.400" height="1.300" fill="#9a96b8"/><rect x="3" y="1.900" width="2.600" height="0.900" fill="#4a5a68"/></svg>
<span class="t" style="left:652.10px;top:566.63px;font-size:7.3px;line-height:11.3px;height:11.3px;letter-spacing:0.037px;color:#222;-webkit-text-stroke:0.090px #222;">SPECIAL ITEMS</span>
<svg style="left:639.1px;top:577.35px" width="10" height="9.700" viewBox="0 0 10 9.700"><rect width="10" height="9.700" fill="#0e3432"/><rect width="10" height="2.200" fill="#10201f"/><rect x="1.300" y="3" width="1.500" height="6.200" fill="#127f6e"/><rect x="3" y="3" width="1.400" height="6.200" fill="#7f8c38"/><rect x="4.700" y="2.600" width="1.400" height="6.600" fill="#6f1c96"/><rect x="6.100" y="3" width="1" height="6.200" fill="#1a20b8"/><rect x="7.200" y="3.600" width="1.900" height="5.600" fill="#34bfe6"/><rect x="5.800" y="1.700" width="3.400" height="1.300" fill="#9a96b8"/><rect x="3" y="1.900" width="2.600" height="0.900" fill="#4a5a68"/></svg>
<span class="t" style="left:652.10px;top:577.90px;font-size:7.3px;line-height:11.3px;height:11.3px;letter-spacing:-0.029px;color:#222;-webkit-text-stroke:0.090px #222;">TEMP ASSEMBLIES</span>
<div style="left:0px;top:649px;width:1200px;height:1px;background:#edf3fa;"></div>
<div style="left:0px;top:650px;width:1200px;height:25px;background:#1b2846;"></div>
<svg style="left:9.500px;top:658px" width="12" height="11" viewBox="0 0 12 12" preserveAspectRatio="none"><path d="M0 1.700L5 1V5.600H0ZM5.800 0.900L12 0V5.600H5.800ZM0 6.400H5V11L0 10.300ZM5.800 6.400H12V12L5.800 11.100Z" fill="#fff"/></svg>
<div style="left:300.3px;top:217.2px;width:599px;height:214.8px;background:#bfd1ea;border:1px solid #a3b3c9;border-radius:4.500px 4.500px 1px 1px;box-shadow:2.300px 2.400px 0.600px -0.300px rgba(66,62,66,0.850);"></div>
<div style="left:301.3px;top:218.2px;width:597px;height:20.4px;background:linear-gradient(#c8d8ed 0,#bdcfe8 50%,#b5c8e4 100%);border-radius:3.500px 3.500px 0 0;"></div>
<span class="t" style="left:580.09px;top:224.35px;font-size:7.3px;line-height:11.3px;height:11.3px;letter-spacing:0.289px;color:#2a3442;-webkit-text-stroke:0.090px #2a3442;">Quantity</span>
<svg style="left:886.300px;top:223.800px" width="7" height="7" viewBox="0 0 7 7"><path d="M0.800 0.800l5.400 5.400M6.200 0.800L0.800 6.200" stroke="#93a6c2" stroke-width="2.300"/><path d="M0.800 0.800l5.400 5.400M6.200 0.800L0.800 6.200" stroke="#f4f7fb" stroke-width="1"/></svg>
<div style="left:303.5px;top:238.6px;width:592.5px;height:192.7px;background:#dbe7f5;"></div>
<div style="left:303.7px;top:238.6px;width:15px;height:169px;background:#d6e3f3;border:1px solid #a9bdd8;border-top:1px solid #b7c8e0;border-radius:0 0 2px 2px;"></div>
<div style="left:321.2px;top:238.6px;width:574.6px;height:169px;background:#dde8f5;border:1px solid #a9bdd8;border-top:1px solid #b7c8e0;border-radius:0 0 2px 2px;"></div>
<span class="t" style="left:334.00px;top:245.35px;font-size:7.3px;line-height:11.3px;height:11.3px;letter-spacing:0.442px;color:#1c1c1c;-webkit-text-stroke:0.090px #1c1c1c;">Comment (leave blank for none):</span>
<div style="left:331.5px;top:257.5px;width:156.5px;height:47.5px;background:#fff;border:1px solid #b5c6df;"></div>
<span class="t" style="left:334.50px;top:258.85px;font-size:7.3px;line-height:11.3px;height:11.3px;letter-spacing:0.171px;color:#222;-webkit-text-stroke:0.090px #222;">VOICE 1</span>
<div style="left:477.3px;top:258.5px;width:9.7px;height:45.5px;background:linear-gradient(to right,#c6d5ec 0,#b9cbe7 30%,#b6c8e5 100%);border-left:1px solid #d3dff0;"></div>
<svg style="left:479.200px;top:260.500px" width="6" height="3.600" viewBox="0 0 6 3.600"><path d="M0 3.600L3 0.300L6 3.600z" fill="#93a8ca"/></svg>
<svg style="left:479.200px;top:297.500px" width="6" height="3.600" viewBox="0 0 6 3.600"><path d="M0 0L3 3.300L6 0z" fill="#6f87ab"/></svg>
<div style="left:497px;top:245.8px;width:22.8px;height:14.3px;background:linear-gradient(#edf2f8 0,#d3deeb 46%,#a9b8cf 54%,#bccade 100%);border:1px solid #7f93b0;border-radius:2.500px;box-shadow:inset 0 0 0 1px rgba(255,255,255,0.550);"></div>
<span class="t" style="left:505.28px;top:248.10px;font-size:7.5px;line-height:11.5px;height:11.5px;letter-spacing:-0.047px;color:#1c1c1c;font-weight:bold;">M</span>
<div style="left:332px;top:317.8px;width:7.5px;height:7.5px;background:#e6ecf5;border:1px solid #cfd8e6;"></div>
<span class="t" style="left:342.40px;top:316.45px;font-size:7.3px;line-height:11.3px;height:11.3px;letter-spacing:0.391px;color:#1c1c1c;-webkit-text-stroke:0.090px #1c1c1c;">Append a blank Comment</span>
<div style="left:457px;top:317.8px;width:7.5px;height:7.5px;background:#e6ecf5;border:1px solid #cfd8e6;"></div>
<span class="t" style="left:466.70px;top:316.45px;font-size:7.3px;line-height:11.3px;height:11.3px;letter-spacing:0.371px;color:#1c1c1c;-webkit-text-stroke:0.090px #1c1c1c;">Pin Comment</span>
<span class="t" style="left:334.00px;top:329.05px;font-size:7.3px;line-height:11.3px;height:11.3px;letter-spacing:0.383px;color:#1c1c1c;-webkit-text-stroke:0.090px #1c1c1c;">Comment Subtotal:</span>
<div style="left:331.5px;top:341.6px;width:156.5px;height:14px;background:#fff;border:1px solid #c3d2e8;border-radius:1.500px;"></div>
<svg style="left:480.8px;top:348.2px" width="3.400" height="2.400" viewBox="0 0 3.400 2.400"><path d="M0 0h3.400l-1.700 2.200z" fill="#333"/></svg>
<span class="t" style="left:334.50px;top:343.25px;font-size:7.3px;line-height:11.3px;height:11.3px;letter-spacing:0.027px;color:#222;-webkit-text-stroke:0.090px #222;">FACEPLATES/HOUSINGS</span>
<div style="left:531px;top:250px;width:192.5px;height:132.5px;background:#fff;"></div>
<span class="t" style="left:569.64px;top:251.85px;font-size:7.3px;line-height:11.3px;height:11.3px;letter-spacing:0.285px;color:#222;-webkit-text-stroke:0.090px #222;">1V-Fl-w/4P Plate-Cat5e- Generic</span>
<div style="left:531px;top:263.6px;width:192.5px;height:14.4px;background:linear-gradient(#e4ecf7,#d8e4f3);border-bottom:1px solid #c0d0e6;border-top:1px solid #d3dfef;"></div>
<div style="left:661.5px;top:264.5px;width:1px;height:13px;background:#b9cae2;"></div>
<div style="left:662.5px;top:264.5px;width:1px;height:13px;background:#f5f8fc;"></div>
<div style="left:721px;top:264.5px;width:1px;height:13px;background:#c5d3e7;"></div>
<span class="t" style="left:565.47px;top:266.55px;font-size:7.3px;line-height:11.3px;height:11.3px;letter-spacing:0.545px;color:#111;font-weight:bold;">Formula Prompt</span>
<span class="t" style="left:682.49px;top:266.55px;font-size:7.3px;line-height:11.3px;height:11.3px;letter-spacing:0.486px;color:#111;font-weight:bold;">Value</span>
<span class="t" style="left:534.50px;top:279.35px;font-size:7.3px;line-height:11.3px;height:11.3px;letter-spacing:-0.051px;color:#222;-webkit-text-stroke:0.090px #222;">QUANTITY</span>
<span class="t" style="left:701.75px;top:279.35px;font-size:7.3px;line-height:11.3px;height:11.3px;letter-spacing:0.247px;color:#222;-webkit-text-stroke:0.090px #222;">50.00</span>
<div style="left:662px;top:278px;width:1px;height:12px;background:#ececec;"></div>
<div style="left:531px;top:290px;width:192.5px;height:11.3px;background:#3399fe;"></div>
<div style="left:662px;top:290px;width:1px;height:11.3px;background:#5aaeff;"></div>
<span class="t" style="left:534.50px;top:290.75px;font-size:7.3px;line-height:11.3px;height:11.3px;letter-spacing:0.119px;color:#fff;-webkit-text-stroke:0.090px #fff;">AVG FT/ RUN</span>
<span class="t" style="left:705.82px;top:290.75px;font-size:7.3px;line-height:11.3px;height:11.3px;letter-spacing:0.323px;color:#fff;-webkit-text-stroke:0.090px #fff;">0.00</span>
<div style="left:726px;top:249.5px;width:167px;height:133.5px;background:#d9e5f4;border:1.200px solid #3b444e;"></div>
<div style="left:727.5px;top:251px;width:164px;height:14.5px;background:#fff;border-top:1px dashed #b4b4b4;border-bottom:1px dashed #b4b4b4;border-right:1px dashed #c0c0c0;"></div>
<span class="t" style="left:879.12px;top:254.05px;font-size:7.3px;line-height:11.3px;height:11.3px;letter-spacing:0.118px;color:#222;-webkit-text-stroke:0.090px #222;">50.</span>
<div style="left:729.5px;top:275px;width:20px;height:15.5px;border-top:1px solid #9fb0c8;border-left:1px solid #9fb0c8;"></div>
<div style="left:761.7px;top:274.4px;width:41px;height:18px;background:#e8e8e8;border:1px solid #c9c9c9;box-shadow:inset -0.500px -0.500px 0 0.500px #d4d4d4;"></div>
<span class="t" style="left:765.57px;top:278.15px;font-size:7.3px;line-height:11.3px;height:11.3px;letter-spacing:0.232px;color:#d8262c;-webkit-text-stroke:0.130px #d8262c;">Backspac</span>
<div style="left:806px;top:274.4px;width:41px;height:18px;background:#e8e8e8;border:1px solid #c9c9c9;box-shadow:inset -0.500px -0.500px 0 0.500px #d4d4d4;"></div>
<span class="t" style="left:821.59px;top:278.15px;font-size:7.3px;line-height:11.3px;height:11.3px;letter-spacing:-0.321px;color:#d8262c;-webkit-text-stroke:0.130px #d8262c;">CE</span>
<div style="left:850.5px;top:274.4px;width:40.5px;height:18px;background:#e8e8e8;border:1px solid #c9c9c9;box-shadow:inset -0.500px -0.500px 0 0.500px #d4d4d4;"></div>
<span class="t" style="left:868.11px;top:278.15px;font-size:7.3px;line-height:11.3px;height:11.3px;letter-spacing:-0.772px;color:#d8262c;-webkit-text-stroke:0.130px #d8262c;">C</span>
<div style="left:728px;top:298.7px;width:24.5px;height:17.1px;background:#e8e8e8;border:1px solid #c9c9c9;box-shadow:inset -0.500px -0.500px 0 0.500px #d4d4d4;"></div>
<span class="t" style="left:734.91px;top:302.00px;font-size:7.3px;line-height:11.3px;height:11.3px;letter-spacing:-0.676px;color:#d8262c;-webkit-text-stroke:0.130px #d8262c;">MC</span>
<div style="left:761px;top:298.7px;width:22.6px;height:17.1px;background:#e8e8e8;border:1px solid #c9c9c9;box-shadow:inset -0.500px -0.500px 0 0.500px #d4d4d4;"></div>
<span class="t" style="left:770.27px;top:302.00px;font-size:7.3px;line-height:11.3px;height:11.3px;letter-spacing:0.441px;color:#3232c4;-webkit-text-stroke:0.130px #3232c4;">7</span>
<div style="left:787.4px;top:298.7px;width:22.6px;height:17.1px;background:#e8e8e8;border:1px solid #c9c9c9;box-shadow:inset -0.500px -0.500px 0 0.500px #d4d4d4;"></div>
<span class="t" style="left:796.67px;top:302.00px;font-size:7.3px;line-height:11.3px;height:11.3px;letter-spacing:0.441px;color:#3232c4;-webkit-text-stroke:0.130px #3232c4;">8</span>
<div style="left:813.8px;top:298.7px;width:22.6px;height:17.1px;background:#e8e8e8;border:1px solid #c9c9c9;box-shadow:inset -0.500px -0.500px 0 0.500px #d4d4d4;"></div>
<span class="t" style="left:823.07px;top:302.00px;font-size:7.3px;line-height:11.3px;height:11.3px;letter-spacing:0.441px;color:#3232c4;-webkit-text-stroke:0.130px #3232c4;">9</span>
<div style="left:840.1px;top:298.7px;width:22.6px;height:17.1px;background:#e8e8e8;border:1px solid #c9c9c9;box-shadow:inset -0.500px -0.500px 0 0.500px #d4d4d4;"></div>
<span class="t" style="left:850.39px;top:302.00px;font-size:7.3px;line-height:11.3px;height:11.3px;letter-spacing:1.184px;color:#d8262c;-webkit-text-stroke:0.130px #d8262c;">/</span>
<div style="left:866.3px;top:298.7px;width:24.7px;height:17.1px;background:#e8e8e8;border:1px solid #c9c9c9;box-shadow:inset -0.500px -0.500px 0 0.500px #d4d4d4;"></div>
<span class="t" style="left:871.77px;top:302.00px;font-size:7.3px;line-height:11.3px;height:11.3px;letter-spacing:0.533px;color:#3232c4;-webkit-text-stroke:0.130px #3232c4;">sqrt</span>
<div style="left:728px;top:320.3px;width:24.5px;height:17.1px;background:#e8e8e8;border:1px solid #c9c9c9;box-shadow:inset -0.500px -0.500px 0 0.500px #d4d4d4;"></div>
<span class="t" style="left:734.91px;top:323.60px;font-size:7.3px;line-height:11.3px;height:11.3px;letter-spacing:-0.676px;color:#d8262c;-webkit-text-stroke:0.130px #d8262c;">MR</span>
<div style="left:761px;top:320.3px;width:22.6px;height:17.1px;background:#e8e8e8;border:1px solid #c9c9c9;box-shadow:inset -0.500px -0.500px 0 0.500px #d4d4d4;"></div>
<span class="t" style="left:770.27px;top:323.60px;font-size:7.3px;line-height:11.3px;height:11.3px;letter-spacing:0.441px;color:#3232c4;-webkit-text-stroke:0.130px #3232c4;">4</span>
<div style="left:787.4px;top:320.3px;width:22.6px;height:17.1px;background:#e8e8e8;border:1px solid #c9c9c9;box-shadow:inset -0.500px -0.500px 0 0.500px #d4d4d4;"></div>
<span class="t" style="left:796.67px;top:323.60px;font-size:7.3px;line-height:11.3px;height:11.3px;letter-spacing:0.441px;color:#3232c4;-webkit-text-stroke:0.130px #3232c4;">5</span>
<div style="left:813.8px;top:320.3px;width:22.6px;height:17.1px;background:#e8e8e8;border:1px solid #c9c9c9;box-shadow:inset -0.500px -0.500px 0 0.500px #d4d4d4;"></div>
<span class="t" style="left:823.07px;top:323.60px;font-size:7.3px;line-height:11.3px;height:11.3px;letter-spacing:0.441px;color:#3232c4;-webkit-text-stroke:0.130px #3232c4;">6</span>
<div style="left:840.1px;top:320.3px;width:22.6px;height:17.1px;background:#e8e8e8;border:1px solid #c9c9c9;box-shadow:inset -0.500px -0.500px 0 0.500px #d4d4d4;"></div>
<span class="t" style="left:849.98px;top:323.60px;font-size:7.3px;line-height:11.3px;height:11.3px;letter-spacing:1.659px;color:#d8262c;-webkit-text-stroke:0.130px #d8262c;">*</span>
<div style="left:866.3px;top:320.3px;width:24.7px;height:17.1px;background:#e8e8e8;border:1px solid #c9c9c9;box-shadow:inset -0.500px -0.500px 0 0.500px #d4d4d4;"></div>
<span class="t" style="left:875.40px;top:323.60px;font-size:7.3px;line-height:11.3px;height:11.3px;letter-spacing:1.122px;color:#3232c4;-webkit-text-stroke:0.130px #3232c4;">%</span>
<div style="left:728px;top:341.6px;width:24.5px;height:17.1px;background:#e8e8e8;border:1px solid #c9c9c9;box-shadow:inset -0.500px -0.500px 0 0.500px #d4d4d4;"></div>
<span class="t" style="left:735.14px;top:344.90px;font-size:7.3px;line-height:11.3px;height:11.3px;letter-spacing:-0.725px;color:#d8262c;-webkit-text-stroke:0.130px #d8262c;">MS</span>
<div style="left:761px;top:341.6px;width:22.6px;height:17.1px;background:#e8e8e8;border:1px solid #c9c9c9;box-shadow:inset -0.500px -0.500px 0 0.500px #d4d4d4;"></div>
<span class="t" style="left:770.27px;top:344.90px;font-size:7.3px;line-height:11.3px;height:11.3px;letter-spacing:0.441px;color:#3232c4;-webkit-text-stroke:0.130px #3232c4;">1</span>
<div style="left:787.4px;top:341.6px;width:22.6px;height:17.1px;background:#e8e8e8;border:1px solid #c9c9c9;box-shadow:inset -0.500px -0.500px 0 0.500px #d4d4d4;"></div>
<span class="t" style="left:796.67px;top:344.90px;font-size:7.3px;line-height:11.3px;height:11.3px;letter-spacing:0.441px;color:#3232c4;-webkit-text-stroke:0.130px #3232c4;">2</span>
<div style="left:813.8px;top:341.6px;width:22.6px;height:17.1px;background:#e8e8e8;border:1px solid #c9c9c9;box-shadow:inset -0.500px -0.500px 0 0.500px #d4d4d4;"></div>
<span class="t" style="left:823.07px;top:344.90px;font-size:7.3px;line-height:11.3px;height:11.3px;letter-spacing:0.441px;color:#3232c4;-webkit-text-stroke:0.130px #3232c4;">3</span>
<div style="left:840.1px;top:341.6px;width:22.6px;height:17.1px;background:#e8e8e8;border:1px solid #c9c9c9;box-shadow:inset -0.500px -0.500px 0 0.500px #d4d4d4;"></div>
<span class="t" style="left:850.18px;top:344.90px;font-size:7.3px;line-height:11.3px;height:11.3px;letter-spacing:0.782px;color:#d8262c;-webkit-text-stroke:0.130px #d8262c;">-</span>
<div style="left:866.3px;top:341.6px;width:24.7px;height:17.1px;background:#e8e8e8;border:1px solid #c9c9c9;box-shadow:inset -0.500px -0.500px 0 0.500px #d4d4d4;"></div>
<span class="t" style="left:873.19px;top:344.90px;font-size:7.3px;line-height:11.3px;height:11.3px;letter-spacing:0.587px;color:#3232c4;-webkit-text-stroke:0.130px #3232c4;">1/x</span>
<div style="left:728px;top:362.7px;width:24.5px;height:17.1px;background:#e8e8e8;border:1px solid #c9c9c9;box-shadow:inset -0.500px -0.500px 0 0.500px #d4d4d4;"></div>
<span class="t" style="left:735.04px;top:366.00px;font-size:7.3px;line-height:11.3px;height:11.3px;letter-spacing:0.078px;color:#d8262c;-webkit-text-stroke:0.130px #d8262c;">M+</span>
<div style="left:761px;top:362.7px;width:22.6px;height:17.1px;background:#e8e8e8;border:1px solid #c9c9c9;box-shadow:inset -0.500px -0.500px 0 0.500px #d4d4d4;"></div>
<span class="t" style="left:770.27px;top:366.00px;font-size:7.3px;line-height:11.3px;height:11.3px;letter-spacing:0.441px;color:#3232c4;-webkit-text-stroke:0.130px #3232c4;">0</span>
<div style="left:787.4px;top:362.7px;width:22.6px;height:17.1px;background:#e8e8e8;border:1px solid #c9c9c9;box-shadow:inset -0.500px -0.500px 0 0.500px #d4d4d4;"></div>
<span class="t" style="left:793.58px;top:366.00px;font-size:7.3px;line-height:11.3px;height:11.3px;letter-spacing:0.759px;color:#3232c4;-webkit-text-stroke:0.130px #3232c4;">+/-</span>
<div style="left:813.8px;top:362.7px;width:22.6px;height:17.1px;background:#e8e8e8;border:1px solid #c9c9c9;box-shadow:inset -0.500px -0.500px 0 0.500px #d4d4d4;"></div>
<span class="t" style="left:824.09px;top:366.00px;font-size:7.3px;line-height:11.3px;height:11.3px;letter-spacing:0.548px;color:#3232c4;-webkit-text-stroke:0.130px #3232c4;">.</span>
<div style="left:840.1px;top:362.7px;width:22.6px;height:17.1px;background:#e8e8e8;border:1px solid #c9c9c9;box-shadow:inset -0.500px -0.500px 0 0.500px #d4d4d4;"></div>
<span class="t" style="left:849.27px;top:366.00px;font-size:7.3px;line-height:11.3px;height:11.3px;letter-spacing:1.525px;color:#d8262c;-webkit-text-stroke:0.130px #d8262c;">+</span>
<div style="left:866.3px;top:362.7px;width:24.7px;height:17.1px;background:#e8e8e8;border:1px solid #c9c9c9;box-shadow:inset -0.500px -0.500px 0 0.500px #d4d4d4;"></div>
<span class="t" style="left:876.52px;top:366.00px;font-size:7.3px;line-height:11.3px;height:11.3px;letter-spacing:1.525px;color:#d8262c;-webkit-text-stroke:0.130px #d8262c;">=</span>
<div style="left:575px;top:392px;width:7.5px;height:7.5px;border-radius:50%;background:radial-gradient(circle,#ff8a1a 0,#f39a2e 35%,#f5e6cf 60%,#e8eef6 100%);border:1px solid #9aa5b4;"></div>
<span class="t" style="left:584.40px;top:390.85px;font-size:7.3px;line-height:11.3px;height:11.3px;letter-spacing:0.239px;color:#1c1c1c;-webkit-text-stroke:0.090px #1c1c1c;">Append</span>
<div style="left:622px;top:392px;width:8px;height:8px;border-radius:50%;background:#eef2f8;border:1px solid #8d97a5;"></div>
<span class="t" style="left:632.00px;top:390.85px;font-size:7.3px;line-height:11.3px;height:11.3px;letter-spacing:0.541px;color:#1c1c1c;-webkit-text-stroke:0.090px #1c1c1c;">Insert</span>
<div style="left:663px;top:392px;width:7.5px;height:7.5px;background:#e6ecf5;border:1px solid #cfd8e6;"></div>
<span class="t" style="left:672.50px;top:390.85px;font-size:7.3px;line-height:11.3px;height:11.3px;letter-spacing:0.317px;color:#1c1c1c;-webkit-text-stroke:0.090px #1c1c1c;">Pin Insert</span>
<div style="left:736.5px;top:389.3px;width:76px;height:13.6px;background:linear-gradient(#eef3fa,#dde6f2);border:1px solid #b5c1d2;border-radius:2.500px;"></div>
<span class="t" style="left:746.08px;top:391.25px;font-size:7.3px;line-height:11.3px;height:11.3px;letter-spacing:0.669px;color:#a3a9b3;font-weight:bold;">Direct Takeoff</span>
<div style="left:816.8px;top:389.3px;width:76.7px;height:13.6px;background:linear-gradient(#fdf0c0 0,#fbdc7c 22%,#f9c432 40%,#f8c02c 60%,#fdd866 80%,#ffe78f 100%);border:1px solid #c4b48a;border-radius:2.500px;box-shadow:inset 0 0 0 1px rgba(255,255,255,0.550);"></div>
<span class="t" style="left:828.47px;top:391.35px;font-size:7.3px;line-height:11.3px;height:11.3px;letter-spacing:0.647px;color:#111;font-weight:bold;">Enter Prompt</span>
<div style="left:515.6px;top:412px;width:74.4px;height:14.2px;background:linear-gradient(#edf2f8 0,#d3deeb 46%,#a9b8cf 54%,#bccade 100%);border:1px solid #7f93b0;border-radius:2.500px;box-shadow:inset 0 0 0 1px rgba(255,255,255,0.550);"></div>
<span class="t" style="left:526.22px;top:414.35px;font-size:7.3px;line-height:11.3px;height:11.3px;letter-spacing:0.349px;color:#1c1c1c;-webkit-text-stroke:0.090px #1c1c1c;">View Assembly</span>
<div style="left:799.4px;top:412.3px;width:46.5px;height:13.8px;background:linear-gradient(#edf2f8 0,#d3deeb 46%,#a9b8cf 54%,#bccade 100%);border:1px solid #7f93b0;border-radius:2.500px;box-shadow:inset 0 0 0 1px rgba(255,255,255,0.550);"></div>
<span class="t" style="left:810.55px;top:414.45px;font-size:7.3px;line-height:11.3px;height:11.3px;letter-spacing:0.296px;color:#1c1c1c;-webkit-text-stroke:0.090px #1c1c1c;">Cancel</span>
<div style="left:848.3px;top:412.3px;width:46.5px;height:13.8px;background:linear-gradient(#edf2f8 0,#d3deeb 46%,#a9b8cf 54%,#bccade 100%);border:1px solid #7f93b0;border-radius:2.500px;box-shadow:inset 0 0 0 1px rgba(255,255,255,0.550);"></div>
<span class="t" style="left:864.24px;top:414.45px;font-size:7.3px;line-height:11.3px;height:11.3px;letter-spacing:-0.128px;color:#1c1c1c;-webkit-text-stroke:0.090px #1c1c1c;">Help</span>
<svg style="left:836px;top:396px" width="8" height="11" viewBox="0 0 8 11"><path d="M0.600 0.500V8.300L2.500 6.700L4 10.200L5.400 9.600L3.900 6.200H6.600z" fill="#fff" stroke="#555" stroke-width="0.600"/></svg>
</body></html>
